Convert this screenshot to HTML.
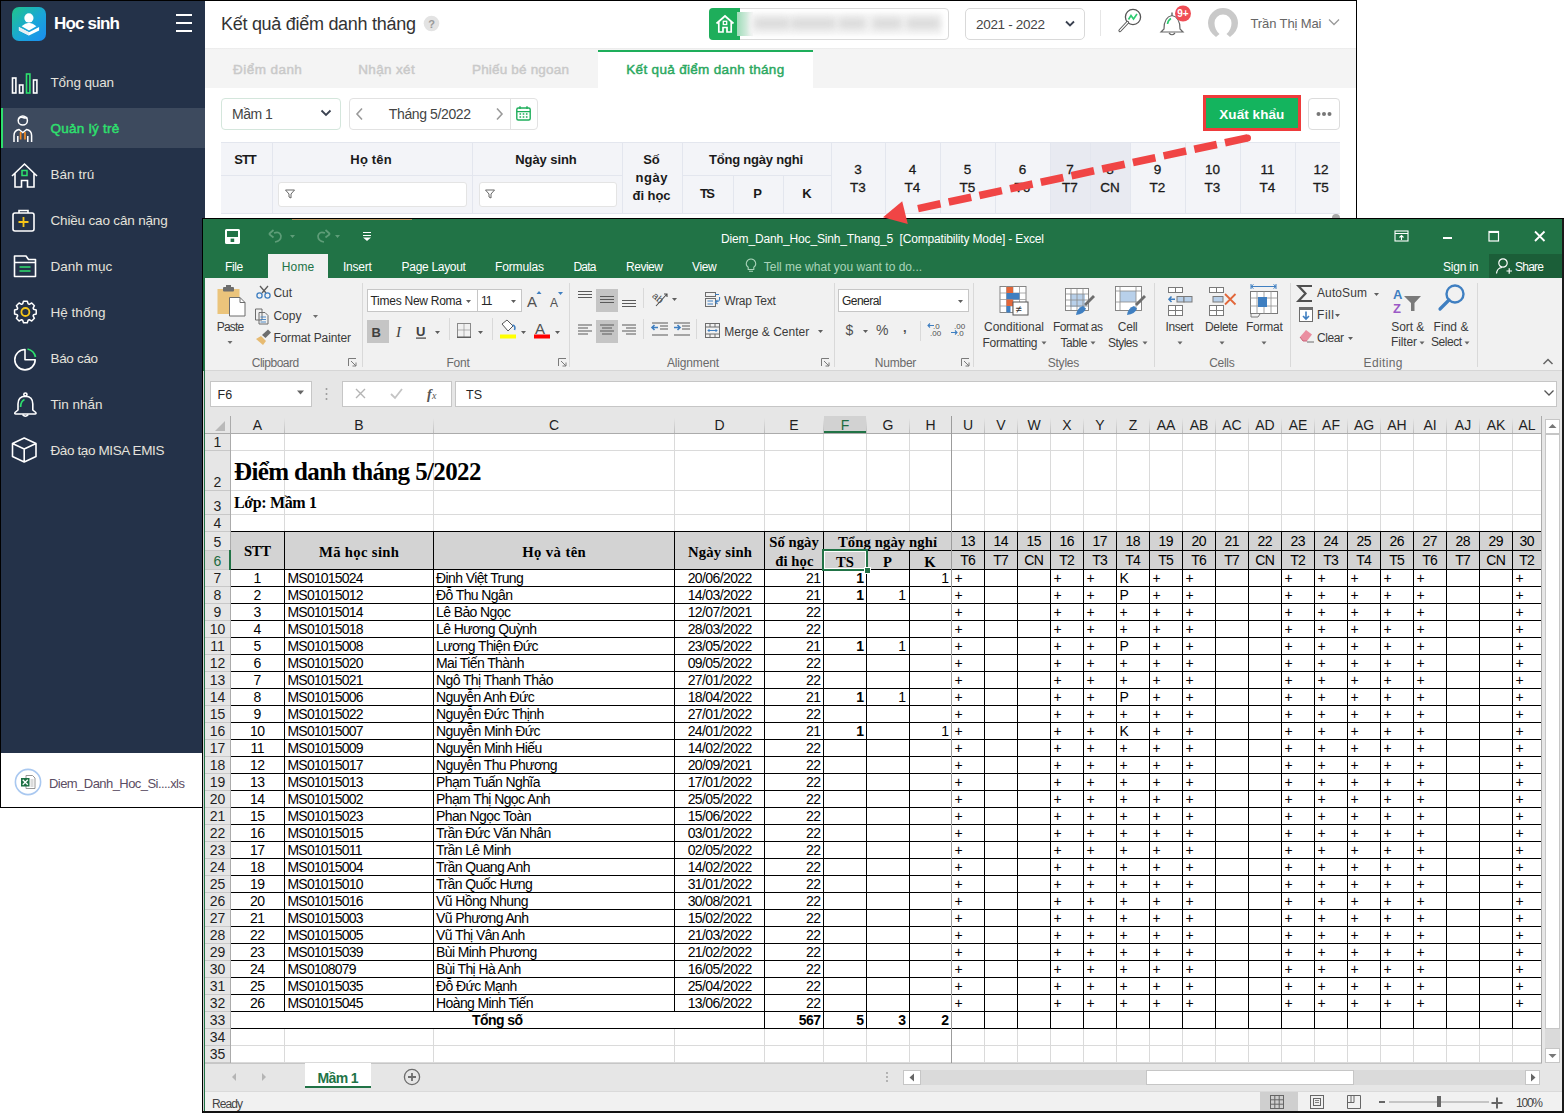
<!DOCTYPE html>
<html><head><meta charset="utf-8"><title>Excel export</title>
<style>
html,body{margin:0;padding:0;}
body{width:1564px;height:1113px;position:relative;overflow:hidden;background:#fff;font-family:"Liberation Sans",sans-serif;}
body>div{position:absolute;}
body>svg{position:absolute;}
</style></head><body>
<div style="left:0px;top:0px;width:1357px;height:1px;background:#000;"></div>
<div style="left:0px;top:0px;width:1px;height:808px;background:#000;"></div>
<div style="left:1356px;top:0px;width:1px;height:220px;background:#000;"></div>
<div style="left:0px;top:807px;width:203px;height:1px;background:#000;"></div>
<div style="left:1px;top:1px;width:204px;height:752px;background:#243249;"></div>
<div style="left:1px;top:108px;width:204px;height:40px;background:#3d4a5e;"></div>
<div style="left:1px;top:108px;width:2px;height:40px;background:#2ee06e;"></div>
<div style="left:12px;top:7px;width:34px;height:34px;background:linear-gradient(135deg,#20c58a 0%,#1aa6d8 55%,#1a8cf2 100%);border-radius:7px;"></div>
<svg style="left:12px;top:7px" width="34" height="34" viewBox="0 0 34 34"><circle cx="16.9" cy="10.9" r="4.6" fill="#fff"/><path d="M9.6 19.3 Q17 12.2 24.4 19.3 L17 23.4 Z" fill="#fff"/><path d="M6.9 20 L17 25.2 L27.1 20 L27.1 23.4 L17 28.6 L6.9 23.4 Z" fill="#fff"/><path d="M6.9 20 L17 25.2 V28.6 L6.9 23.4 Z" fill="#e8eef2"/></svg>
<div style="left:54.00px;top:14px;font:700 17px/19px 'Liberation Sans',sans-serif;color:#fff;white-space:nowrap;letter-spacing:-0.828px;">Học sinh</div>
<div style="left:176px;top:14px;width:16px;height:2.4px;background:#fff;"></div>
<div style="left:176px;top:22px;width:16px;height:2.4px;background:#fff;"></div>
<div style="left:176px;top:30px;width:16px;height:2.4px;background:#fff;"></div>
<div style="left:50.50px;top:75px;font:400 13.5px/15px 'Liberation Sans',sans-serif;color:#e4e2dc;white-space:nowrap;letter-spacing:-0.126px;">Tổng quan</div>
<div style="left:50.50px;top:121px;font:400 13.5px/15px 'Liberation Sans',sans-serif;color:#2ee06e;white-space:nowrap;letter-spacing:0.274px;-webkit-text-stroke:0.45px currentColor;">Quản lý trẻ</div>
<div style="left:50.50px;top:167px;font:400 13.5px/15px 'Liberation Sans',sans-serif;color:#e4e2dc;white-space:nowrap;letter-spacing:0.026px;">Bán trú</div>
<div style="left:50.50px;top:213px;font:400 13.5px/15px 'Liberation Sans',sans-serif;color:#e4e2dc;white-space:nowrap;letter-spacing:-0.169px;">Chiều cao cân nặng</div>
<div style="left:50.50px;top:259px;font:400 13.5px/15px 'Liberation Sans',sans-serif;color:#e4e2dc;white-space:nowrap;letter-spacing:0.034px;">Danh mục</div>
<div style="left:50.50px;top:305px;font:400 13.5px/15px 'Liberation Sans',sans-serif;color:#e4e2dc;white-space:nowrap;letter-spacing:0.025px;">Hệ thống</div>
<div style="left:50.50px;top:351px;font:400 13.5px/15px 'Liberation Sans',sans-serif;color:#e4e2dc;white-space:nowrap;letter-spacing:-0.327px;">Báo cáo</div>
<div style="left:50.50px;top:397px;font:400 13.5px/15px 'Liberation Sans',sans-serif;color:#e4e2dc;white-space:nowrap;letter-spacing:0.003px;">Tin nhắn</div>
<div style="left:50.50px;top:443px;font:400 13.5px/15px 'Liberation Sans',sans-serif;color:#e4e2dc;white-space:nowrap;letter-spacing:-0.385px;">Đào tạo MISA EMIS</div>
<svg style="left:8px;top:64.5px" width="34" height="420" viewBox="0 0 34 420">
<g fill="none" stroke="#fff" stroke-width="1.6">
 <rect x="4.5" y="13" width="3.4" height="15"/><rect x="11.5" y="20" width="3.4" height="8"/>
 <rect x="25.5" y="15" width="3.4" height="13"/>
</g>
<rect x="18.5" y="9" width="3.4" height="19" fill="none" stroke="#2ee06e" stroke-width="1.6"/>
<g fill="none" stroke="#fff" stroke-width="1.5">
 <circle cx="14.8" cy="55.5" r="4.6"/>
 <path d="M10.5 54 Q12 51.5 15 52.5 Q17.5 53.5 19.4 52.5"/>
 <path d="M6 77 V70.5 Q6 65.5 11 64.5 L14.8 67.5 L18.6 64.5 Q23.6 65.5 23.6 70.5 V77"/>
 <path d="M9.8 77 V71 M19.8 77 V71"/>
</g>
<path d="M12.6 67 V74.5 M17 67 V74.5" stroke="#f08a24" stroke-width="1.7" fill="none"/>
<g fill="none" stroke="#fff" stroke-width="1.6">
 <path d="M4 111 L16.5 99 L29 111 M7 108.5 V122 H13.5 V115.5 H19.5 V122 H26 V108.5"/>
</g>
<rect x="14" y="105.5" width="5" height="5" fill="none" stroke="#2ee06e" stroke-width="1.5"/>
<g fill="none" stroke="#fff" stroke-width="1.6">
 <rect x="5" y="148" width="21" height="18" rx="2"/><path d="M11 148 V145.5 H20 V148"/>
</g>
<path d="M15.5 152 V162 M10.5 157 H20.5" stroke="#f5c518" stroke-width="1.8"/>
</svg>
<svg style="left:0;top:240px" width="50" height="230" viewBox="0 240 50 230">
<g fill="none" stroke="#fff" stroke-width="1.6" stroke-linejoin="round">
 <path d="M14.5 259.5 V256 H26 L28.5 259.5 H35.5 V276.5 H14.5 Z M14.5 262.5 H35.5"/>
</g>
<path d="M19.5 267 H30.5 M19.5 271 H30.5" stroke="#2ee06e" stroke-width="1.7"/>
<path d="M33.56 309.27 L36.23 310.09 L36.23 313.91 L33.56 314.73 L33.10 315.84 L34.41 318.31 L31.71 321.01 L29.24 319.70 L28.13 320.16 L27.31 322.83 L23.49 322.83 L22.67 320.16 L21.56 319.70 L19.09 321.01 L16.39 318.31 L17.70 315.84 L17.24 314.73 L14.57 313.91 L14.57 310.09 L17.24 309.27 L17.70 308.16 L16.39 305.69 L19.09 302.99 L21.56 304.30 L22.67 303.84 L23.49 301.17 L27.31 301.17 L28.13 303.84 L29.24 304.30 L31.71 302.99 L34.41 305.69 L33.10 308.16 Z" fill="none" stroke="#fff" stroke-width="1.5" stroke-linejoin="round"/>
<circle cx="25.4" cy="312" r="4" fill="none" stroke="#f5c518" stroke-width="1.8"/>
<path d="M25 349.5 A10.2 10.2 0 1 0 35.2 359.7 H25 Z" fill="none" stroke="#fff" stroke-width="1.6" stroke-linejoin="round"/>
<path d="M27.5 349 A10.5 10.5 0 0 1 35.5 357" fill="none" stroke="#2ee06e" stroke-width="1.7"/>
<g fill="none" stroke="#fff" stroke-width="1.6" stroke-linejoin="round">
 <circle cx="25.4" cy="394.6" r="1.6"/>
 <path d="M18 410 V404 Q18 396.5 25.4 396.3 Q32.8 396.5 32.8 404 V410 L35.8 412.5 Q36.5 414 35 414 H15.8 Q14.3 414 15 412.5 Z"/>
 <path d="M22.5 414.5 Q25.4 418 28.3 414.5"/>
</g>
<path d="M20.6 407 Q20.8 401 24.5 399.5" fill="none" stroke="#2ee06e" stroke-width="1.7"/>
<g fill="none" stroke="#fff" stroke-width="1.6" stroke-linejoin="round">
 <path d="M24.2 438 L36 443.5 V456.5 L24.2 462 L12.5 456.5 V443.5 Z M12.5 443.5 L24.2 449 L36 443.5 M24.2 449 V462"/>
</g>
</svg>
<div style="left:1px;top:753px;width:202px;height:54px;background:#fff;"></div>
<svg style="left:14px;top:768px" width="28" height="28" viewBox="0 0 28 28">
<circle cx="14" cy="14" r="12.6" fill="#fff" stroke="#a9c8f0" stroke-width="1.6"/>
<path d="M12 7.5 H18.5 L21 10 V20.5 H12 Z" fill="#fff" stroke="#8a8a8a" stroke-width="0.9"/>
<rect x="7" y="10" width="8.5" height="8.5" fill="#1d7044"/>
<path d="M8.7 11.8 L13.8 16.8 M13.8 11.8 L8.7 16.8" stroke="#fff" stroke-width="1.3"/>
<path d="M16.5 12 H19.5 M16.5 14 H19.5 M16.5 16 H19.5 M16.5 18 H19.5" stroke="#9a9a9a" stroke-width="0.7"/>
</svg>
<div style="left:49.00px;top:776px;font:400 13px/15px 'Liberation Sans',sans-serif;color:#5b4d63;white-space:nowrap;letter-spacing:-0.553px;">Diem_Danh_Hoc_Si....xls</div>
<div style="left:205px;top:1px;width:1151px;height:48px;background:#fff;"></div>
<div style="left:221.00px;top:14px;font:400 18px/20px 'Liberation Sans',sans-serif;color:#333;white-space:nowrap;letter-spacing:-0.283px;">Kết quả điểm danh tháng</div>
<svg style="left:423px;top:15px" width="17" height="17" viewBox="0 0 17 17"><circle cx="8.5" cy="8.5" r="7.8" fill="#e3e3e3"/><text x="8.5" y="12.6" font-family="Liberation Sans" font-size="11" font-weight="700" fill="#9a9a9a" text-anchor="middle">?</text></svg>
<div style="left:709px;top:8px;width:240px;height:32px;box-sizing:border-box;border:1px solid #d9d9d9;background:#fff;border-radius:4px;"></div>
<div style="left:709px;top:8px;width:31px;height:32px;background:#1eae5b;border-radius:4px 0 0 4px;"></div>
<svg style="left:713px;top:12px" width="24" height="24" viewBox="0 0 24 24"><path d="M3.5 11.5 L12 4 L20.5 11.5 M5.8 9.5 V20 H10 V15.5 H14 V20 H18.2 V9.5" fill="none" stroke="#fff" stroke-width="1.7"/><rect x="10.3" y="9.3" width="3.4" height="3.2" fill="none" stroke="#fff" stroke-width="1.3"/></svg>
<div style="left:737px;top:12px;width:16px;height:24px;background:linear-gradient(90deg,#9edcb8,#f4f4f4);"></div>
<div style="left:750px;top:13px;width:192px;height:22px;background:#f3f3f3;filter:blur(2px);"></div>
<div style="left:754px;top:18px;width:36px;height:11px;background:#dcdcdc;filter:blur(3px);border-radius:5px;"></div>
<div style="left:790px;top:18px;width:46px;height:11px;background:#dcdcdc;filter:blur(3px);border-radius:5px;"></div>
<div style="left:838px;top:18px;width:28px;height:11px;background:#dcdcdc;filter:blur(3px);border-radius:5px;"></div>
<div style="left:872px;top:18px;width:30px;height:11px;background:#dcdcdc;filter:blur(3px);border-radius:5px;"></div>
<div style="left:906px;top:18px;width:34px;height:11px;background:#dcdcdc;filter:blur(3px);border-radius:5px;"></div>
<div style="left:965px;top:8px;width:120px;height:32px;box-sizing:border-box;border:1px solid #d9d9d9;background:#fff;border-radius:5px;"></div>
<div style="left:976.00px;top:17px;font:400 13.5px/15px 'Liberation Sans',sans-serif;color:#444;white-space:nowrap;letter-spacing:-0.312px;">2021 - 2022</div>
<svg style="left:1064px;top:19px" width="12" height="10" viewBox="0 0 12 10"><path d="M2 2.5 L6 6.5 L10 2.5" fill="none" stroke="#3a4150" stroke-width="1.8"/></svg>
<div style="left:1100px;top:10px;width:1px;height:26px;background:#e6e6e6;"></div>
<svg style="left:1114px;top:6px" width="30" height="30" viewBox="0 0 30 30">
<circle cx="19" cy="11" r="7.6" fill="none" stroke="#555" stroke-width="1.3"/>
<path d="M13.5 16.5 L6 24.5" stroke="#555" stroke-width="3.2" stroke-linecap="round"/>
<path d="M13.5 16.5 L6 24.5" stroke="#fff" stroke-width="1.2" stroke-linecap="round"/>
<path d="M14.5 13.5 L17 9.5 L19.5 13 L23 8" fill="none" stroke="#2ecc71" stroke-width="1.6"/>
</svg>
<svg style="left:1158px;top:5px" width="38" height="34" viewBox="0 -1 38 34">
<path d="M6 23 Q6 11 14 9.5 Q22 11 22 23 L25 26 H3 Z" fill="none" stroke="#666" stroke-width="1.2"/>
<path d="M11 27 Q14 30.5 17 27" fill="none" stroke="#666" stroke-width="1.2"/>
<path d="M14 6.5 V9.5" stroke="#666" stroke-width="1.4"/>
<path d="M9.5 18 Q10 14 13 12.5" fill="none" stroke="#2ecc71" stroke-width="1.6"/>
<circle cx="25" cy="7.5" r="8" fill="#ef4d55"/>
<text x="25" y="11" font-family="Liberation Sans" font-size="10" font-weight="700" fill="#fff" text-anchor="middle">9+</text>
</svg>
<svg style="left:1206px;top:6px" width="34" height="34" viewBox="0 0 34 34"><path d="M10 31 Q2 25 2 17 A15 15 0 0 1 32 17 Q32 25 24 31 L20.5 28 Q25.5 23.5 25.5 17 A8.5 8.5 0 0 0 8.5 17 Q8.5 23.5 13.5 28 Z" fill="#c9c9c9"/></svg>
<div style="left:1250.50px;top:16px;font:400 13px/15px 'Liberation Sans',sans-serif;color:#666;white-space:nowrap;letter-spacing:-0.114px;">Trần Thị Mai</div>
<svg style="left:1327px;top:17px" width="14" height="10" viewBox="0 0 14 10"><path d="M2 2.5 L7 7.5 L12 2.5" fill="none" stroke="#9a9a9a" stroke-width="1.3"/></svg>
<div style="left:205px;top:48px;width:1151px;height:2px;background:linear-gradient(#e9e9e9,#f7f7f7);"></div>
<div style="left:205px;top:50px;width:1151px;height:38px;background:#f4f4f4;"></div>
<div style="left:598px;top:50px;width:215px;height:38px;background:#fff;"></div>
<div style="left:598px;top:50px;width:215px;height:2px;background:#1eae5b;"></div>
<div style="left:233.10px;top:62px;font:400 13.5px/15px 'Liberation Sans',sans-serif;color:#c9c9c9;white-space:nowrap;letter-spacing:0.434px;-webkit-text-stroke:0.45px currentColor;">Điểm danh</div>
<div style="left:358.25px;top:62px;font:400 13.5px/15px 'Liberation Sans',sans-serif;color:#c9c9c9;white-space:nowrap;letter-spacing:0.348px;-webkit-text-stroke:0.45px currentColor;">Nhận xét</div>
<div style="left:472.00px;top:62px;font:400 13.5px/15px 'Liberation Sans',sans-serif;color:#c9c9c9;white-space:nowrap;letter-spacing:0.180px;-webkit-text-stroke:0.45px currentColor;">Phiếu bé ngoan</div>
<div style="left:626.30px;top:62px;font:400 13.5px/15px 'Liberation Sans',sans-serif;color:#2aa860;white-space:nowrap;letter-spacing:0.320px;-webkit-text-stroke:0.45px currentColor;">Kết quả điểm danh tháng</div>
<div style="left:221px;top:98px;width:120px;height:32px;box-sizing:border-box;border:1px solid #d4e6dc;background:#fff;border-radius:4px;"></div>
<div style="left:232.00px;top:106px;font:400 14px/16px 'Liberation Sans',sans-serif;color:#444;white-space:nowrap;letter-spacing:-0.491px;">Mầm 1</div>
<svg style="left:319px;top:108px" width="14" height="10" viewBox="0 0 14 10"><path d="M2.5 2.5 L7 7 L11.5 2.5" fill="none" stroke="#3a4150" stroke-width="1.8"/></svg>
<div style="left:349px;top:98px;width:189px;height:32px;box-sizing:border-box;border:1px solid #e2e2e2;background:#fff;border-radius:4px;"></div>
<svg style="left:354px;top:106px" width="12" height="16" viewBox="0 0 12 16"><path d="M8 2.5 L3 8 L8 13.5" fill="none" stroke="#9a9a9a" stroke-width="1.6"/></svg>
<div style="left:388.80px;top:106px;font:400 14px/16px 'Liberation Sans',sans-serif;color:#444;white-space:nowrap;letter-spacing:-0.378px;">Tháng 5/2022</div>
<svg style="left:493px;top:106px" width="12" height="16" viewBox="0 0 12 16"><path d="M4 2.5 L9 8 L4 13.5" fill="none" stroke="#9a9a9a" stroke-width="1.6"/></svg>
<div style="left:510px;top:99px;width:1px;height:30px;background:#e2e2e2;"></div>
<svg style="left:515px;top:105px" width="17" height="17" viewBox="0 0 17 17">
<rect x="1.8" y="3" width="13.4" height="12" rx="1.5" fill="none" stroke="#1eae5b" stroke-width="1.4"/>
<path d="M1.8 6.6 H15.2 M5 1.2 V4 M12 1.2 V4" stroke="#1eae5b" stroke-width="1.4"/>
<path d="M4.5 9 h1.6 M7.7 9 h1.6 M10.9 9 h1.6 M4.5 12 h1.6 M7.7 12 h1.6 M10.9 12 h1.6" stroke="#1eae5b" stroke-width="1.5"/>
</svg>
<div style="left:1203px;top:94.5px;width:98px;height:36px;background:#ee3b3b;"></div>
<div style="left:1206px;top:97.5px;width:92px;height:30px;background:#14b45e;"></div>
<div style="left:1219.30px;top:107px;font:700 13.5px/15px 'Liberation Sans',sans-serif;color:#fff;white-space:nowrap;letter-spacing:0.057px;">Xuất khẩu</div>
<div style="left:1308px;top:98px;width:32px;height:32px;box-sizing:border-box;border:1px solid #dcdcdc;background:#fff;border-radius:4px;"></div>
<svg style="left:1314px;top:108px" width="20" height="12" viewBox="0 0 20 12"><circle cx="4.5" cy="6" r="2" fill="#777"/><circle cx="10" cy="6" r="2" fill="#777"/><circle cx="15.5" cy="6" r="2" fill="#777"/></svg>
<div style="left:221px;top:142px;width:1119px;height:72px;background:#f3f4f8;"></div>
<div style="left:221px;top:142px;width:1119px;height:1px;background:#e3e6ee;"></div>
<div style="left:1050px;top:143px;width:80px;height:71px;background:#e8eaf1;"></div>
<div style="left:272px;top:143px;width:1px;height:71px;background:#e3e6ee;"></div>
<div style="left:472px;top:143px;width:1px;height:71px;background:#e3e6ee;"></div>
<div style="left:622px;top:143px;width:1px;height:71px;background:#e3e6ee;"></div>
<div style="left:682px;top:143px;width:1px;height:71px;background:#e3e6ee;"></div>
<div style="left:831px;top:143px;width:1px;height:71px;background:#e3e6ee;"></div>
<div style="left:885px;top:143px;width:1px;height:71px;background:#e3e6ee;"></div>
<div style="left:940px;top:143px;width:1px;height:71px;background:#e3e6ee;"></div>
<div style="left:995px;top:143px;width:1px;height:71px;background:#e3e6ee;"></div>
<div style="left:1050px;top:143px;width:1px;height:71px;background:#e3e6ee;"></div>
<div style="left:1090px;top:143px;width:1px;height:71px;background:#e3e6ee;"></div>
<div style="left:1130px;top:143px;width:1px;height:71px;background:#e3e6ee;"></div>
<div style="left:1185px;top:143px;width:1px;height:71px;background:#e3e6ee;"></div>
<div style="left:1240px;top:143px;width:1px;height:71px;background:#e3e6ee;"></div>
<div style="left:1295px;top:143px;width:1px;height:71px;background:#e3e6ee;"></div>
<div style="left:221px;top:175px;width:51px;height:1px;background:#e3e6ee;"></div>
<div style="left:273px;top:175px;width:349px;height:1px;background:#e3e6ee;"></div>
<div style="left:683px;top:175px;width:148px;height:1px;background:#e3e6ee;"></div>
<div style="left:733px;top:176px;width:1px;height:38px;background:#e3e6ee;"></div>
<div style="left:783px;top:176px;width:1px;height:38px;background:#e3e6ee;"></div>
<div style="left:221px;top:213px;width:1119px;height:1px;background:#e3e6ee;"></div>
<div style="left:234.25px;top:152px;font:700 13px/15px 'Liberation Sans',sans-serif;color:#1a1a1a;white-space:nowrap;letter-spacing:-1.023px;">STT</div>
<div style="left:350.35px;top:152px;font:700 13px/15px 'Liberation Sans',sans-serif;color:#1a1a1a;white-space:nowrap;letter-spacing:0.172px;">Họ tên</div>
<div style="left:515.25px;top:152px;font:700 13px/15px 'Liberation Sans',sans-serif;color:#1a1a1a;white-space:nowrap;letter-spacing:-0.078px;">Ngày sinh</div>
<div style="left:643.20px;top:152px;font:700 13px/15px 'Liberation Sans',sans-serif;color:#1a1a1a;white-space:nowrap;">Số</div>
<div style="left:635.50px;top:170px;font:700 13px/15px 'Liberation Sans',sans-serif;color:#1a1a1a;white-space:nowrap;letter-spacing:0.552px;">ngày</div>
<div style="left:632.50px;top:188px;font:700 13px/15px 'Liberation Sans',sans-serif;color:#1a1a1a;white-space:nowrap;letter-spacing:-0.053px;">đi học</div>
<div style="left:709.00px;top:152px;font:700 13px/15px 'Liberation Sans',sans-serif;color:#1a1a1a;white-space:nowrap;letter-spacing:-0.210px;">Tổng ngày nghỉ</div>
<div style="left:700.00px;top:186px;font:700 13px/15px 'Liberation Sans',sans-serif;color:#1a1a1a;white-space:nowrap;letter-spacing:-1.609px;">TS</div>
<div style="left:753.16px;top:186px;font:700 13px/15px 'Liberation Sans',sans-serif;color:#1a1a1a;white-space:nowrap;">P</div>
<div style="left:802.30px;top:186px;font:700 13px/15px 'Liberation Sans',sans-serif;color:#1a1a1a;white-space:nowrap;">K</div>
<div style="left:854.24px;top:162px;font:400 13.5px/15px 'Liberation Sans',sans-serif;color:#1a1a1a;white-space:nowrap;-webkit-text-stroke:0.3px #1a1a1a;">3</div>
<div style="left:850.12px;top:180px;font:400 13.5px/15px 'Liberation Sans',sans-serif;color:#1a1a1a;white-space:nowrap;-webkit-text-stroke:0.3px #1a1a1a;">T3</div>
<div style="left:908.74px;top:162px;font:400 13.5px/15px 'Liberation Sans',sans-serif;color:#1a1a1a;white-space:nowrap;-webkit-text-stroke:0.3px #1a1a1a;">4</div>
<div style="left:904.62px;top:180px;font:400 13.5px/15px 'Liberation Sans',sans-serif;color:#1a1a1a;white-space:nowrap;-webkit-text-stroke:0.3px #1a1a1a;">T4</div>
<div style="left:963.74px;top:162px;font:400 13.5px/15px 'Liberation Sans',sans-serif;color:#1a1a1a;white-space:nowrap;-webkit-text-stroke:0.3px #1a1a1a;">5</div>
<div style="left:959.62px;top:180px;font:400 13.5px/15px 'Liberation Sans',sans-serif;color:#1a1a1a;white-space:nowrap;-webkit-text-stroke:0.3px #1a1a1a;">T5</div>
<div style="left:1018.74px;top:162px;font:400 13.5px/15px 'Liberation Sans',sans-serif;color:#1a1a1a;white-space:nowrap;-webkit-text-stroke:0.3px #1a1a1a;">6</div>
<div style="left:1014.62px;top:180px;font:400 13.5px/15px 'Liberation Sans',sans-serif;color:#1a1a1a;white-space:nowrap;-webkit-text-stroke:0.3px #1a1a1a;">T6</div>
<div style="left:1066.24px;top:162px;font:400 13.5px/15px 'Liberation Sans',sans-serif;color:#1a1a1a;white-space:nowrap;-webkit-text-stroke:0.3px #1a1a1a;">7</div>
<div style="left:1062.12px;top:180px;font:400 13.5px/15px 'Liberation Sans',sans-serif;color:#1a1a1a;white-space:nowrap;-webkit-text-stroke:0.3px #1a1a1a;">T7</div>
<div style="left:1106.24px;top:162px;font:400 13.5px/15px 'Liberation Sans',sans-serif;color:#1a1a1a;white-space:nowrap;-webkit-text-stroke:0.3px #1a1a1a;">8</div>
<div style="left:1100.25px;top:180px;font:400 13.5px/15px 'Liberation Sans',sans-serif;color:#1a1a1a;white-space:nowrap;-webkit-text-stroke:0.3px #1a1a1a;">CN</div>
<div style="left:1153.74px;top:162px;font:400 13.5px/15px 'Liberation Sans',sans-serif;color:#1a1a1a;white-space:nowrap;-webkit-text-stroke:0.3px #1a1a1a;">9</div>
<div style="left:1149.62px;top:180px;font:400 13.5px/15px 'Liberation Sans',sans-serif;color:#1a1a1a;white-space:nowrap;-webkit-text-stroke:0.3px #1a1a1a;">T2</div>
<div style="left:1204.98px;top:162px;font:400 13.5px/15px 'Liberation Sans',sans-serif;color:#1a1a1a;white-space:nowrap;-webkit-text-stroke:0.3px #1a1a1a;">10</div>
<div style="left:1204.62px;top:180px;font:400 13.5px/15px 'Liberation Sans',sans-serif;color:#1a1a1a;white-space:nowrap;-webkit-text-stroke:0.3px #1a1a1a;">T3</div>
<div style="left:1260.48px;top:162px;font:400 13.5px/15px 'Liberation Sans',sans-serif;color:#1a1a1a;white-space:nowrap;-webkit-text-stroke:0.3px #1a1a1a;">11</div>
<div style="left:1259.62px;top:180px;font:400 13.5px/15px 'Liberation Sans',sans-serif;color:#1a1a1a;white-space:nowrap;-webkit-text-stroke:0.3px #1a1a1a;">T4</div>
<div style="left:1313.48px;top:162px;font:400 13.5px/15px 'Liberation Sans',sans-serif;color:#1a1a1a;white-space:nowrap;-webkit-text-stroke:0.3px #1a1a1a;">12</div>
<div style="left:1313.12px;top:180px;font:400 13.5px/15px 'Liberation Sans',sans-serif;color:#1a1a1a;white-space:nowrap;-webkit-text-stroke:0.3px #1a1a1a;">T5</div>
<div style="left:278px;top:182px;width:189px;height:25px;box-sizing:border-box;border:1px solid #e4e4e4;background:#fff;border-radius:3px;"></div>
<div style="left:479px;top:182px;width:138px;height:25px;box-sizing:border-box;border:1px solid #e4e4e4;background:#fff;border-radius:3px;"></div>
<svg style="left:284px;top:188px" width="12" height="12" viewBox="0 0 12 12"><path d="M1.5 2 H10.5 L7 6 V10 L5 9 V6 Z" fill="none" stroke="#666" stroke-width="1"/></svg>
<svg style="left:484px;top:188px" width="12" height="12" viewBox="0 0 12 12"><path d="M1.5 2 H10.5 L7 6 V10 L5 9 V6 Z" fill="none" stroke="#666" stroke-width="1"/></svg>
<svg style="left:1330px;top:210px" width="12" height="9" viewBox="0 0 12 9"><circle cx="6" cy="8" r="4" fill="#a8a8a8"/></svg>
<div style="left:202px;top:218px;width:1362px;height:1px;background:#000;"></div>
<div style="left:202px;top:218px;width:1px;height:895px;background:#000;"></div>
<div style="left:203px;top:219px;width:1361px;height:894px;background:#217346;"></div>
<div style="left:203px;top:371px;width:1px;height:742px;background:#cfcfcf;"></div>
<div style="left:292px;top:219px;width:120px;height:1px;background:#b0955e;"></div>
<div style="left:721.00px;top:232px;font:400 12px/14px 'Liberation Sans',sans-serif;color:#fff;white-space:nowrap;letter-spacing:-0.154px;">Diem_Danh_Hoc_Sinh_Thang_5&nbsp; [Compatibility Mode] - Excel</div>
<svg style="left:222px;top:226px" width="160" height="20" viewBox="0 0 160 20">
<rect x="4" y="4" width="13" height="13" rx="0.5" fill="none" stroke="#fff" stroke-width="2"/>
<rect x="5" y="11" width="11" height="5" fill="#fff"/><rect x="8.6" y="12.6" width="3.6" height="3.4" fill="#217346"/>
<g fill="none" stroke="#5e9d78" stroke-width="1.7">
<path d="M52 7 Q58 5 59 10 Q59 15 53 16"/><path d="M47 8 L51.5 4 M47 8 L51.5 11.5"/>
<path d="M103 7 Q97 5 96 10 Q96 15 102 16"/><path d="M108 8 L103.5 4 M108 8 L103.5 11.5"/>
</g>
<path d="M68 9 h5 l-2.5 3 z M113 9 h5 l-2.5 3 z" fill="#5e9d78"/>
<path d="M141 6.5 H149 M141 9.5 H149" stroke="#fff" stroke-width="1.2"/><path d="M141 11.5 H149 L145 15 Z" fill="#fff"/>
</svg>
<svg style="left:1390px;top:226px" width="165" height="20" viewBox="0 0 165 20">
<rect x="5" y="5" width="13" height="10" fill="none" stroke="#fff" stroke-width="1.1"/>
<path d="M5 7.5 H18 M11.5 14 V9.5 M9.5 11.5 L11.5 9.5 L13.5 11.5" fill="none" stroke="#fff" stroke-width="1.1"/>
<rect x="53" y="11" width="9" height="2" fill="#fff"/>
<rect x="99" y="5.5" width="9.5" height="9.5" fill="none" stroke="#fff" stroke-width="1.2"/><rect x="99" y="5" width="9.5" height="2" fill="#fff"/>
<path d="M145 5.5 L154.5 15 M154.5 5.5 L145 15" stroke="#fff" stroke-width="1.8"/>
</svg>
<div style="left:268px;top:254px;width:60px;height:24px;background:#f1f1f1;"></div>
<div style="left:225.00px;top:260px;font:400 12px/14px 'Liberation Sans',sans-serif;color:#fff;white-space:nowrap;letter-spacing:-0.348px;">File</div>
<div style="left:281.70px;top:260px;font:400 12px/14px 'Liberation Sans',sans-serif;color:#217346;white-space:nowrap;letter-spacing:0.195px;">Home</div>
<div style="left:343.00px;top:260px;font:400 12px/14px 'Liberation Sans',sans-serif;color:#fff;white-space:nowrap;letter-spacing:-0.240px;">Insert</div>
<div style="left:401.60px;top:260px;font:400 12px/14px 'Liberation Sans',sans-serif;color:#fff;white-space:nowrap;letter-spacing:-0.306px;">Page Layout</div>
<div style="left:495.00px;top:260px;font:400 12px/14px 'Liberation Sans',sans-serif;color:#fff;white-space:nowrap;letter-spacing:-0.145px;">Formulas</div>
<div style="left:573.40px;top:260px;font:400 12px/14px 'Liberation Sans',sans-serif;color:#fff;white-space:nowrap;letter-spacing:-0.781px;">Data</div>
<div style="left:626.00px;top:260px;font:400 12px/14px 'Liberation Sans',sans-serif;color:#fff;white-space:nowrap;letter-spacing:-0.472px;">Review</div>
<div style="left:692.00px;top:260px;font:400 12px/14px 'Liberation Sans',sans-serif;color:#fff;white-space:nowrap;letter-spacing:-0.366px;">View</div>
<svg style="left:744px;top:257px" width="14" height="17" viewBox="0 0 14 17"><path d="M7 2 A4.6 4.6 0 0 0 4.2 10.3 V12.5 H9.8 V10.3 A4.6 4.6 0 0 0 7 2 Z M5 14.3 H9" fill="none" stroke="#a9d3b9" stroke-width="1.1"/></svg>
<div style="left:763.70px;top:260px;font:400 12px/14px 'Liberation Sans',sans-serif;color:#a9d3b9;white-space:nowrap;letter-spacing:0.010px;">Tell me what you want to do...</div>
<div style="left:1443.00px;top:260px;font:400 12px/14px 'Liberation Sans',sans-serif;color:#fff;white-space:nowrap;letter-spacing:-0.198px;">Sign in</div>
<div style="left:1489px;top:254px;width:73px;height:24px;background:#1b5e38;"></div>
<svg style="left:1494px;top:256px" width="20" height="20" viewBox="0 0 20 20"><circle cx="9" cy="7" r="4.2" fill="none" stroke="#fff" stroke-width="1.2"/><path d="M2.5 17.5 Q3 12 8 11.5 M12.5 15 H18 M15.2 12.2 V17.8" fill="none" stroke="#fff" stroke-width="1.2"/></svg>
<div style="left:1515.00px;top:260px;font:400 12px/14px 'Liberation Sans',sans-serif;color:#fff;white-space:nowrap;letter-spacing:-0.754px;">Share</div>
<div style="left:205px;top:278px;width:1357px;height:92px;background:#f1f1f1;"></div>
<div style="left:205px;top:370px;width:1357px;height:1px;background:#d6d6d6;"></div>
<div style="left:362px;top:283px;width:1px;height:84px;background:#d9d9d9;"></div>
<div style="left:569px;top:283px;width:1px;height:84px;background:#d9d9d9;"></div>
<div style="left:834px;top:283px;width:1px;height:84px;background:#d9d9d9;"></div>
<div style="left:973px;top:283px;width:1px;height:84px;background:#d9d9d9;"></div>
<div style="left:1154px;top:283px;width:1px;height:84px;background:#d9d9d9;"></div>
<div style="left:1290px;top:283px;width:1px;height:84px;background:#d9d9d9;"></div>
<div style="left:1477px;top:283px;width:1px;height:84px;background:#d9d9d9;"></div>
<div style="left:251.75px;top:356px;font:400 12px/14px 'Liberation Sans',sans-serif;color:#6a6a6a;white-space:nowrap;letter-spacing:-0.484px;">Clipboard</div>
<div style="left:446.45px;top:356px;font:400 12px/14px 'Liberation Sans',sans-serif;color:#6a6a6a;white-space:nowrap;letter-spacing:-0.167px;">Font</div>
<div style="left:667.00px;top:356px;font:400 12px/14px 'Liberation Sans',sans-serif;color:#6a6a6a;white-space:nowrap;letter-spacing:-0.170px;">Alignment</div>
<div style="left:874.85px;top:356px;font:400 12px/14px 'Liberation Sans',sans-serif;color:#6a6a6a;white-space:nowrap;letter-spacing:-0.237px;">Number</div>
<div style="left:1047.75px;top:356px;font:400 12px/14px 'Liberation Sans',sans-serif;color:#6a6a6a;white-space:nowrap;letter-spacing:-0.234px;">Styles</div>
<div style="left:1209.25px;top:356px;font:400 12px/14px 'Liberation Sans',sans-serif;color:#6a6a6a;white-space:nowrap;letter-spacing:-0.297px;">Cells</div>
<div style="left:1363.50px;top:356px;font:400 12px/14px 'Liberation Sans',sans-serif;color:#6a6a6a;white-space:nowrap;letter-spacing:0.385px;">Editing</div>
<svg style="left:348px;top:358px" width="9" height="9" viewBox="0 0 9 9"><path d="M0.5 8 V0.5 H8 M3 3 L8 8 M8 4.5 V8 H4.5" fill="none" stroke="#7a7a7a" stroke-width="1"/></svg>
<svg style="left:558px;top:358px" width="9" height="9" viewBox="0 0 9 9"><path d="M0.5 8 V0.5 H8 M3 3 L8 8 M8 4.5 V8 H4.5" fill="none" stroke="#7a7a7a" stroke-width="1"/></svg>
<svg style="left:821px;top:358px" width="9" height="9" viewBox="0 0 9 9"><path d="M0.5 8 V0.5 H8 M3 3 L8 8 M8 4.5 V8 H4.5" fill="none" stroke="#7a7a7a" stroke-width="1"/></svg>
<svg style="left:961px;top:358px" width="9" height="9" viewBox="0 0 9 9"><path d="M0.5 8 V0.5 H8 M3 3 L8 8 M8 4.5 V8 H4.5" fill="none" stroke="#7a7a7a" stroke-width="1"/></svg>
<svg style="left:1542px;top:357px" width="12" height="9" viewBox="0 0 12 9"><path d="M1.5 7 L6 2.5 L10.5 7" fill="none" stroke="#666" stroke-width="1.5"/></svg>
<svg style="left:215px;top:284px" width="160" height="64" viewBox="0 0 160 64">
<rect x="2.5" y="5" width="22" height="25" fill="#ebc47b"/>
<rect x="8" y="3" width="11" height="4.5" rx="1" fill="#6d6d6d"/><rect x="11" y="1" width="5" height="3" fill="#6d6d6d"/>
<path d="M14.5 13.5 H25 L30 18.5 V32 H14.5 Z" fill="#fff" stroke="#6d6d6d" stroke-width="1"/>
<path d="M25 13.5 V18.5 H30" fill="none" stroke="#6d6d6d" stroke-width="1"/>
<path d="M12.5 57 h5 l-2.5 3 z" fill="#6d6d6d"/>
<g fill="none" stroke="#5c5c5c" stroke-width="1.3"><path d="M45 2 L51 9 M53 2 L47 9"/></g>
<g fill="none" stroke="#3f7fc1" stroke-width="1.3"><circle cx="44.5" cy="11.5" r="2.6"/><circle cx="52.5" cy="11.5" r="2.6"/></g>
<g fill="none" stroke="#6d6d6d" stroke-width="1"><path d="M40.5 25 H47 V36 H40.5 Z M44 28.5 H50 L53 31.5 V40 H44 Z"/></g>
<path d="M45.5 33 H51 M45.5 35.5 H51 M45.5 38 H51" stroke="#3f7fc1" stroke-width="0.9"/>
<path d="M98 31 h5 l-2.5 3 z" fill="#6d6d6d"/>
<path d="M41 55 L46 52 L51 57 L48 61 Z" fill="#e7bb72"/><path d="M47 51 L53 45.5 L56 48.5 L50.5 54 Z" fill="#6d6d6d"/>
</svg>
<div style="left:216.75px;top:320px;font:400 12px/14px 'Liberation Sans',sans-serif;color:#3b3b3b;white-space:nowrap;letter-spacing:-0.793px;">Paste</div>
<div style="left:273.40px;top:286px;font:400 12px/14px 'Liberation Sans',sans-serif;color:#3b3b3b;white-space:nowrap;letter-spacing:0.064px;">Cut</div>
<div style="left:273.40px;top:309px;font:400 12px/14px 'Liberation Sans',sans-serif;color:#3b3b3b;white-space:nowrap;letter-spacing:-0.005px;">Copy</div>
<div style="left:273.40px;top:331px;font:400 12px/14px 'Liberation Sans',sans-serif;color:#3b3b3b;white-space:nowrap;letter-spacing:-0.142px;">Format Painter</div>
<div style="left:367px;top:289px;width:111px;height:23px;box-sizing:border-box;border:1px solid #c6c6c6;background:#fff;"></div>
<div style="left:477px;top:289px;width:45px;height:23px;box-sizing:border-box;border:1px solid #c6c6c6;background:#fff;"></div>
<div style="left:370.50px;top:294px;font:400 12px/14px 'Liberation Sans',sans-serif;color:#262626;white-space:nowrap;letter-spacing:-0.263px;">Times New Roma</div>
<div style="left:481.00px;top:294px;font:400 12px/14px 'Liberation Sans',sans-serif;color:#262626;white-space:nowrap;letter-spacing:-1.000px;">11</div>
<div style="left:367px;top:320px;width:22px;height:23px;background:#c5c5c5;"></div>
<svg style="left:365px;top:288px" width="205" height="60" viewBox="0 0 205 60">
<path d="M101 12 h5 l-2.5 3 z M146 12 h5 l-2.5 3 z" fill="#5e5e5e"/>
<text x="162" y="19" font-family="Liberation Sans" font-size="15" fill="#505050">A</text>
<path d="M171.5 6 l2.5 -3 l2.5 3 z" fill="#3f7fc1"/>
<text x="185" y="19" font-family="Liberation Sans" font-size="12" fill="#505050">A</text>
<path d="M193 4 l2.5 3 l2.5 -3 z" fill="#3f7fc1"/>
<text x="6.5" y="48.5" font-family="Liberation Sans" font-size="13" font-weight="700" fill="#404040">B</text>
<text x="31" y="48.5" font-family="Liberation Serif" font-size="15" font-style="italic" fill="#404040">I</text>
<text x="51" y="47.5" font-family="Liberation Sans" font-size="13" font-weight="700" fill="#404040">U</text>
<rect x="51" y="49.5" width="10" height="1.2" fill="#404040"/>
<path d="M70 43 h5 l-2.5 3 z M113 43 h5 l-2.5 3 z M156 43 h5 l-2.5 3 z M190 43 h5 l-2.5 3 z" fill="#5e5e5e"/>
<g fill="#8a8a8a"><rect x="92" y="35" width="14" height="1"/><rect x="92" y="41.5" width="14" height="1" opacity=".6"/><rect x="92" y="35" width="1" height="14"/><rect x="105" y="35" width="1" height="14"/><rect x="98.5" y="35" width="1" height="14" opacity=".6"/></g>
<rect x="92" y="48.5" width="14" height="1.5" fill="#5e5e5e"/>
<rect x="84" y="30" width="1" height="22" fill="#d9d9d9"/><rect x="127" y="30" width="1" height="22" fill="#d9d9d9"/>
<path d="M137 36 L142 32 L148 38 L143 43 Z" fill="#fff" stroke="#555" stroke-width="1"/>
<path d="M147.5 37 Q151 38 149.5 42" fill="none" stroke="#3f7fc1" stroke-width="1.6"/>
<rect x="135" y="46.5" width="16" height="4" fill="#ffff00"/>
<text x="170" y="45.5" font-family="Liberation Sans" font-size="15" fill="#505050">A</text>
<rect x="169" y="46.5" width="16" height="4" fill="#ff0000"/>
</svg>
<div style="left:596px;top:289px;width:22px;height:23px;background:#c5c5c5;"></div>
<div style="left:596px;top:320px;width:22px;height:23px;background:#c5c5c5;"></div>
<svg style="left:576px;top:286px" width="130" height="60" viewBox="0 0 130 60">
<g stroke="#5a5a5a" stroke-width="1.1">
<path d="M2 5.5 H16 M2 8.5 H16 M2 11.5 H16"/>
<path d="M24 10.5 H38 M24 13.5 H38 M24 16.5 H38"/>
<path d="M46 14.5 H60 M46 17.5 H60 M46 20.5 H60"/>
<path d="M2 39 H16 M2 42 H12 M2 45 H16 M2 48 H12"/>
<path d="M24 39 H38 M26 42 H36 M24 45 H38 M26 48 H36"/>
<path d="M46 39 H60 M50 42 H60 M46 45 H60 M50 48 H60"/>
<path d="M84 40 H92 M84 43 H92 M76 49 H92 M76 37 H92"/>
<path d="M106 40 H114 M106 43 H114 M98 49 H114 M98 37 H114"/>
</g>
<path d="M82 41.5 H76 M78.5 39 L76 41.5 L78.5 44" stroke="#3f7fc1" stroke-width="1.6" fill="none"/>
<path d="M98 41.5 H104 M101.5 39 L104 41.5 L101.5 44" stroke="#3f7fc1" stroke-width="1.6" fill="none"/>
<rect x="67" y="33" width="1" height="20" fill="#d9d9d9"/><rect x="67" y="2" width="1" height="20" fill="#d9d9d9"/>
<rect x="120" y="33" width="1" height="20" fill="#d9d9d9"/>
<text x="77" y="15" font-family="Liberation Sans" font-size="10" fill="#4a4a4a" transform="rotate(40 82 11)">ab</text>
<path d="M80 20 L91 8 M88 8 H91 V11" stroke="#4a4a4a" stroke-width="1.1" fill="none"/>
<path d="M96 12 h5 l-2.5 3 z" fill="#5e5e5e"/>
</svg>
<svg style="left:703px;top:290px" width="125" height="52" viewBox="0 0 125 52">
<rect x="2.5" y="2.5" width="10" height="4" fill="none" stroke="#6d6d6d" stroke-width="1"/>
<rect x="2.5" y="8.5" width="10" height="8" fill="none" stroke="#6d6d6d" stroke-width="1"/>
<path d="M4.5 11 H10 M4.5 14 H10 M12 4.5 H16" stroke="#3f7fc1" stroke-width="1"/>
<path d="M16.5 7 Q17.5 12 12.5 12 M14.5 10 L12.5 12 L14.5 14" fill="none" stroke="#3f7fc1" stroke-width="1.2"/>
<rect x="2.5" y="33.5" width="14" height="14" fill="none" stroke="#6d6d6d" stroke-width="1"/>
<path d="M2.5 37 H16.5 M2.5 44 H16.5 M7 33.5 V37 M12 33.5 V37 M7 44 V47.5 M12 44 V47.5" stroke="#6d6d6d" stroke-width="1"/>
<path d="M5 40.5 H14 M6.5 39 L5 40.5 L6.5 42 M12.5 39 L14 40.5 L12.5 42" stroke="#3f7fc1" stroke-width="1" fill="none"/>
<path d="M115 40 h5 l-2.5 3 z" fill="#5e5e5e"/>
</svg>
<div style="left:724.30px;top:294px;font:400 12px/14px 'Liberation Sans',sans-serif;color:#3b3b3b;white-space:nowrap;letter-spacing:-0.270px;">Wrap Text</div>
<div style="left:724.30px;top:325px;font:400 12px/14px 'Liberation Sans',sans-serif;color:#3b3b3b;white-space:nowrap;letter-spacing:0.024px;">Merge & Center</div>
<div style="left:838px;top:289px;width:131px;height:23px;box-sizing:border-box;border:1px solid #c6c6c6;background:#fff;"></div>
<div style="left:842.00px;top:294px;font:400 12px/14px 'Liberation Sans',sans-serif;color:#262626;white-space:nowrap;letter-spacing:-0.531px;">General</div>
<svg style="left:840px;top:288px" width="130" height="60" viewBox="0 0 130 60">
<path d="M118 12 h5 l-2.5 3 z" fill="#5e5e5e"/>
<text x="5.5" y="47" font-family="Liberation Sans" font-size="14" fill="#505050">$</text>
<path d="M23 42 h5 l-2.5 3 z" fill="#5e5e5e"/>
<text x="36" y="47" font-family="Liberation Sans" font-size="14" fill="#505050">%</text>
<text x="63" y="44" font-family="Liberation Sans" font-size="13" font-weight="700" fill="#505050">,</text>
<rect x="80" y="33" width="1" height="20" fill="#d9d9d9"/>
<text x="93" y="41" font-family="Liberation Sans" font-size="8" fill="#505050">.0</text>
<text x="90" y="48" font-family="Liberation Sans" font-size="8" fill="#505050">.00</text>
<path d="M94 37.5 H88 M90 35.5 L88 37.5 L90 39.5" stroke="#3f7fc1" stroke-width="1.1" fill="none"/>
<text x="114" y="41" font-family="Liberation Sans" font-size="8" fill="#505050">.00</text>
<text x="117" y="48" font-family="Liberation Sans" font-size="8" fill="#505050">.0</text>
<path d="M111 44.5 H117 M115 42.5 L117 44.5 L115 46.5" stroke="#3f7fc1" stroke-width="1.1" fill="none"/>
</svg>
<svg style="left:997px;top:284px" width="155" height="36" viewBox="0 0 155 36">
<g fill="#fff" stroke="#7a7a7a" stroke-width="0.9">
<rect x="3" y="2.5" width="26" height="26"/>
</g>
<path d="M3 9 H29 M3 15.5 H29 M3 22 H29 M9.5 2.5 V28.5 M16 2.5 V28.5 M22.5 2.5 V28.5" stroke="#9a9a9a" stroke-width="0.8"/>
<rect x="9.5" y="3" width="6.5" height="6" fill="#e2673a"/><rect x="9.5" y="9" width="13" height="6.5" fill="#3f7fc1"/>
<rect x="9.5" y="15.5" width="6.5" height="6.5" fill="#e2673a"/><rect x="9.5" y="22" width="4" height="6.5" fill="#3f7fc1"/>
<rect x="16" y="18" width="15" height="13" fill="#fff" stroke="#555" stroke-width="1"/>
<text x="18.5" y="29" font-family="Liberation Sans" font-size="11" fill="#333">≠</text>
<rect x="68.5" y="4.5" width="23" height="22" fill="#fff" stroke="#7a7a7a" stroke-width="0.9"/>
<rect x="73" y="10" width="15" height="13" fill="#b8d0ea"/>
<path d="M68.5 10 H91.5 M68.5 16 H91.5 M68.5 22 H91.5 M74 4.5 V26.5 M80 4.5 V26.5 M86 4.5 V26.5" stroke="#8a8a8a" stroke-width="0.8"/>
<path d="M87 20 L96 11 L98 13 L89 22 Z" fill="#6d6d6d"/>
<path d="M79 31 Q80 24 86 22 L89 24.5 Q87 30 79 31 Z" fill="#3f7fc1"/>
<rect x="118.5" y="2.5" width="26" height="24" fill="#fff" stroke="#7a7a7a" stroke-width="0.9"/>
<rect x="123" y="7" width="16" height="11" fill="#b8d0ea"/>
<path d="M118.5 7 H144.5 M118.5 18 H144.5 M123 2.5 V26.5 M139 2.5 V26.5" stroke="#8a8a8a" stroke-width="0.8"/>
<path d="M138 20 L147 11 L149 13 L140 22 Z" fill="#6d6d6d"/>
<path d="M130 31 Q131 24 137 22 L140 24.5 Q138 30 130 31 Z" fill="#3f7fc1"/>
</svg>
<div style="left:984.00px;top:320px;font:400 12px/14px 'Liberation Sans',sans-serif;color:#3b3b3b;white-space:nowrap;letter-spacing:-0.005px;">Conditional</div>
<div style="left:982.50px;top:336px;font:400 12px/14px 'Liberation Sans',sans-serif;color:#3b3b3b;white-space:nowrap;letter-spacing:-0.260px;">Formatting</div>
<div style="left:1053.00px;top:320px;font:400 12px/14px 'Liberation Sans',sans-serif;color:#3b3b3b;white-space:nowrap;letter-spacing:-0.500px;">Format as</div>
<div style="left:1060.50px;top:336px;font:400 12px/14px 'Liberation Sans',sans-serif;color:#3b3b3b;white-space:nowrap;letter-spacing:-0.422px;">Table</div>
<div style="left:1117.80px;top:320px;font:400 12px/14px 'Liberation Sans',sans-serif;color:#3b3b3b;white-space:nowrap;letter-spacing:-0.229px;">Cell</div>
<div style="left:1108.00px;top:336px;font:400 12px/14px 'Liberation Sans',sans-serif;color:#3b3b3b;white-space:nowrap;letter-spacing:-0.534px;">Styles</div>
<svg style="left:1041px;top:340.5px" width="7" height="5" viewBox="0 0 7 5"><path d="M0.5 0.5 h5 l-2.5 3 z" fill="#666"/></svg>
<svg style="left:1090px;top:340.5px" width="7" height="5" viewBox="0 0 7 5"><path d="M0.5 0.5 h5 l-2.5 3 z" fill="#666"/></svg>
<svg style="left:1141.5px;top:340.5px" width="7" height="5" viewBox="0 0 7 5"><path d="M0.5 0.5 h5 l-2.5 3 z" fill="#666"/></svg>
<svg style="left:1176.5px;top:340.5px" width="7" height="5" viewBox="0 0 7 5"><path d="M0.5 0.5 h5 l-2.5 3 z" fill="#666"/></svg>
<svg style="left:1218.5px;top:340.5px" width="7" height="5" viewBox="0 0 7 5"><path d="M0.5 0.5 h5 l-2.5 3 z" fill="#666"/></svg>
<svg style="left:1261.4px;top:340.5px" width="7" height="5" viewBox="0 0 7 5"><path d="M0.5 0.5 h5 l-2.5 3 z" fill="#666"/></svg>
<svg style="left:1419.4px;top:340.5px" width="7" height="5" viewBox="0 0 7 5"><path d="M0.5 0.5 h5 l-2.5 3 z" fill="#666"/></svg>
<svg style="left:1464.3px;top:340.5px" width="7" height="5" viewBox="0 0 7 5"><path d="M0.5 0.5 h5 l-2.5 3 z" fill="#666"/></svg>
<svg style="left:1164px;top:283px" width="120" height="36" viewBox="0 0 120 36">
<g fill="#fff" stroke="#7a7a7a" stroke-width="1">
<rect x="4.5" y="4.5" width="7" height="5"/><rect x="11.5" y="4.5" width="7" height="5"/>
<rect x="4.5" y="22.5" width="7" height="5"/><rect x="11.5" y="22.5" width="7" height="5"/>
<rect x="4.5" y="27.5" width="7" height="5"/><rect x="11.5" y="27.5" width="7" height="5"/>
</g>
<rect x="13" y="13.5" width="7" height="5.5" fill="#b8d0ea" stroke="#7a7a7a" stroke-width="1"/><rect x="20" y="13.5" width="8" height="5.5" fill="#b8d0ea" stroke="#7a7a7a" stroke-width="1"/>
<path d="M11 16.2 H5 M7.5 13.5 L5 16.2 L7.5 19" stroke="#3f7fc1" stroke-width="1.6" fill="none"/>
<g fill="#fff" stroke="#7a7a7a" stroke-width="1">
<rect x="45.5" y="4.5" width="7" height="5"/><rect x="52.5" y="4.5" width="7" height="5"/>
<rect x="45.5" y="22.5" width="7" height="5"/><rect x="52.5" y="22.5" width="7" height="5"/>
<rect x="45.5" y="27.5" width="7" height="5"/><rect x="52.5" y="27.5" width="7" height="5"/>
</g>
<rect x="49" y="13.5" width="10" height="5.5" fill="#b8d0ea" stroke="#7a7a7a" stroke-width="1"/>
<path d="M61 11 L71.5 21.5 M71.5 11 L61 21.5" stroke="#e2673a" stroke-width="1.8"/>
<path d="M87 3.5 H112 M87 1 V6 M112 1 V6 M89.5 1.5 L87 3.5 L89.5 5.5 M109.5 1.5 L112 3.5 L109.5 5.5" stroke="#3f7fc1" stroke-width="1" fill="none"/>
<rect x="86.5" y="8.5" width="27" height="22" fill="#fff" stroke="#7a7a7a" stroke-width="1"/>
<path d="M86.5 15 H113.5 M86.5 23 H113.5 M93 8.5 V30.5 M100 8.5 V30.5 M107 8.5 V30.5" stroke="#9a9a9a" stroke-width="0.9"/>
<rect x="94" y="14" width="9" height="10" fill="#3f7fc1"/>
<path d="M87 31 V34 H94 L96 31" fill="none" stroke="#7a7a7a" stroke-width="1"/>
</svg>
<div style="left:1165.50px;top:320px;font:400 12px/14px 'Liberation Sans',sans-serif;color:#3b3b3b;white-space:nowrap;letter-spacing:-0.400px;">Insert</div>
<div style="left:1205.00px;top:320px;font:400 12px/14px 'Liberation Sans',sans-serif;color:#3b3b3b;white-space:nowrap;letter-spacing:-0.338px;">Delete</div>
<div style="left:1245.90px;top:320px;font:400 12px/14px 'Liberation Sans',sans-serif;color:#3b3b3b;white-space:nowrap;letter-spacing:-0.200px;">Format</div>
<svg style="left:1295px;top:283px" width="175" height="66" viewBox="0 0 175 66">
<path d="M17 3 H3.5 L10.5 10.5 L3.5 18 H17" fill="none" stroke="#505050" stroke-width="2.2"/>
<path d="M79 10 h5 l-2.5 3 z" fill="#5e5e5e"/>
<rect x="4.5" y="24.5" width="13" height="14" fill="#fff" stroke="#6d6d6d" stroke-width="1"/><rect x="4.5" y="24.5" width="13" height="2.5" fill="#6d6d6d"/>
<path d="M11 28.5 V36 M8 33 L11 36 L14 33" stroke="#3f7fc1" stroke-width="1.6" fill="none"/>
<path d="M40 31 h5 l-2.5 3 z M53 54 h5 l-2.5 3 z" fill="#5e5e5e"/>
<path d="M5 54 L11 47 L17 51.5 L12 58 H8 Z" fill="#ea8ea0"/><path d="M5 54 L8 58 H12" fill="none" stroke="#c9657a" stroke-width="1"/>
<path d="M12 59 H19" stroke="#6d6d6d" stroke-width="1"/>
<text x="98" y="16" font-family="Liberation Sans" font-size="13" font-weight="700" fill="#3f7fc1">A</text>
<text x="98" y="30" font-family="Liberation Sans" font-size="13" font-weight="700" fill="#9b59c6">Z</text>
<path d="M109 13 H126 L119.5 20 V28 H116 V20 Z" fill="#7a7a7a"/>
<circle cx="160" cy="11" r="8.5" fill="none" stroke="#3f7fc1" stroke-width="2.4"/>
<path d="M154 17 L145 26" stroke="#3f7fc1" stroke-width="3.2" stroke-linecap="round"/>
</svg>
<div style="left:1317.00px;top:286px;font:400 12px/14px 'Liberation Sans',sans-serif;color:#3b3b3b;white-space:nowrap;letter-spacing:0.109px;">AutoSum</div>
<div style="left:1317.00px;top:308px;font:400 12px/14px 'Liberation Sans',sans-serif;color:#3b3b3b;white-space:nowrap;letter-spacing:0.552px;">Fill</div>
<div style="left:1317.00px;top:331px;font:400 12px/14px 'Liberation Sans',sans-serif;color:#3b3b3b;white-space:nowrap;letter-spacing:-0.422px;">Clear</div>
<div style="left:1391.20px;top:320px;font:400 12px/14px 'Liberation Sans',sans-serif;color:#3b3b3b;white-space:nowrap;letter-spacing:-0.066px;">Sort &</div>
<div style="left:1391.00px;top:335px;font:400 12px/14px 'Liberation Sans',sans-serif;color:#3b3b3b;white-space:nowrap;letter-spacing:-0.134px;">Filter</div>
<div style="left:1433.50px;top:320px;font:400 12px/14px 'Liberation Sans',sans-serif;color:#3b3b3b;white-space:nowrap;letter-spacing:0.066px;">Find &</div>
<div style="left:1431.00px;top:335px;font:400 12px/14px 'Liberation Sans',sans-serif;color:#3b3b3b;white-space:nowrap;letter-spacing:-0.469px;">Select</div>
<div style="left:205px;top:371px;width:1357px;height:45px;background:#e6e6e6;"></div>
<div style="left:210px;top:381px;width:102px;height:26px;box-sizing:border-box;border:1px solid #c6c6c6;background:#fff;"></div>
<div style="left:217.50px;top:388px;font:400 12.5px/14px 'Liberation Sans',sans-serif;color:#262626;white-space:nowrap;">F6</div>
<svg style="left:296px;top:390px" width="10" height="6" viewBox="0 0 10 6"><path d="M1 0.5 h7 l-3.5 4 z" fill="#666"/></svg>
<svg style="left:324px;top:387px" width="5" height="15" viewBox="0 0 5 15"><circle cx="2.5" cy="2" r="1" fill="#9a9a9a"/><circle cx="2.5" cy="7" r="1" fill="#9a9a9a"/><circle cx="2.5" cy="12" r="1" fill="#9a9a9a"/></svg>
<div style="left:342px;top:381px;width:110px;height:26px;box-sizing:border-box;border:1px solid #c6c6c6;background:#fff;"></div>
<svg style="left:352px;top:385px" width="95" height="18" viewBox="0 0 95 18">
<path d="M4 4 L13 13 M13 4 L4 13" stroke="#b4b4b4" stroke-width="1.4"/>
<path d="M39 9 L43 13 L50 4" fill="none" stroke="#c4c4c4" stroke-width="1.8"/>
<text x="75" y="14" font-family="Liberation Serif" font-size="14" font-style="italic" font-weight="700" fill="#555">f</text>
<text x="80" y="14" font-family="Liberation Serif" font-size="10" font-style="italic" fill="#555">x</text>
</svg>
<div style="left:455px;top:381px;width:1102px;height:26px;box-sizing:border-box;border:1px solid #c6c6c6;background:#fff;"></div>
<div style="left:466.00px;top:388px;font:400 12.5px/14px 'Liberation Sans',sans-serif;color:#262626;white-space:nowrap;">TS</div>
<svg style="left:1543px;top:389px" width="12" height="8" viewBox="0 0 12 8"><path d="M1.5 1.5 L6 6 L10.5 1.5" fill="none" stroke="#555" stroke-width="1.3"/></svg>
<div style="left:205px;top:416px;width:1337px;height:17px;background:#e6e6e6;"></div>
<div style="left:205px;top:433px;width:25px;height:630px;background:#e6e6e6;"></div>
<div style="left:231px;top:434px;width:1310px;height:629px;background:#fff;"></div>
<div style="left:284px;top:434px;width:1px;height:629px;background:#dadada;"></div>
<div style="left:433px;top:434px;width:1px;height:629px;background:#dadada;"></div>
<div style="left:674px;top:434px;width:1px;height:629px;background:#dadada;"></div>
<div style="left:764px;top:434px;width:1px;height:629px;background:#dadada;"></div>
<div style="left:823px;top:434px;width:1px;height:629px;background:#dadada;"></div>
<div style="left:866px;top:434px;width:1px;height:629px;background:#dadada;"></div>
<div style="left:909px;top:434px;width:1px;height:629px;background:#dadada;"></div>
<div style="left:951px;top:434px;width:1px;height:629px;background:#dadada;"></div>
<div style="left:984px;top:434px;width:1px;height:629px;background:#dadada;"></div>
<div style="left:1017px;top:434px;width:1px;height:629px;background:#dadada;"></div>
<div style="left:1050px;top:434px;width:1px;height:629px;background:#dadada;"></div>
<div style="left:1083px;top:434px;width:1px;height:629px;background:#dadada;"></div>
<div style="left:1116px;top:434px;width:1px;height:629px;background:#dadada;"></div>
<div style="left:1149px;top:434px;width:1px;height:629px;background:#dadada;"></div>
<div style="left:1182px;top:434px;width:1px;height:629px;background:#dadada;"></div>
<div style="left:1215px;top:434px;width:1px;height:629px;background:#dadada;"></div>
<div style="left:1248px;top:434px;width:1px;height:629px;background:#dadada;"></div>
<div style="left:1281px;top:434px;width:1px;height:629px;background:#dadada;"></div>
<div style="left:1314px;top:434px;width:1px;height:629px;background:#dadada;"></div>
<div style="left:1347px;top:434px;width:1px;height:629px;background:#dadada;"></div>
<div style="left:1380px;top:434px;width:1px;height:629px;background:#dadada;"></div>
<div style="left:1413px;top:434px;width:1px;height:629px;background:#dadada;"></div>
<div style="left:1446px;top:434px;width:1px;height:629px;background:#dadada;"></div>
<div style="left:1479px;top:434px;width:1px;height:629px;background:#dadada;"></div>
<div style="left:1512px;top:434px;width:1px;height:629px;background:#dadada;"></div>
<div style="left:231px;top:450px;width:1310px;height:1px;background:#dadada;"></div>
<div style="left:231px;top:490px;width:1310px;height:1px;background:#dadada;"></div>
<div style="left:231px;top:514px;width:1310px;height:1px;background:#dadada;"></div>
<div style="left:231px;top:531px;width:1310px;height:1px;background:#dadada;"></div>
<div style="left:231px;top:550px;width:1310px;height:1px;background:#dadada;"></div>
<div style="left:231px;top:569px;width:1310px;height:1px;background:#dadada;"></div>
<div style="left:231px;top:586px;width:1310px;height:1px;background:#dadada;"></div>
<div style="left:231px;top:603px;width:1310px;height:1px;background:#dadada;"></div>
<div style="left:231px;top:620px;width:1310px;height:1px;background:#dadada;"></div>
<div style="left:231px;top:637px;width:1310px;height:1px;background:#dadada;"></div>
<div style="left:231px;top:654px;width:1310px;height:1px;background:#dadada;"></div>
<div style="left:231px;top:671px;width:1310px;height:1px;background:#dadada;"></div>
<div style="left:231px;top:688px;width:1310px;height:1px;background:#dadada;"></div>
<div style="left:231px;top:705px;width:1310px;height:1px;background:#dadada;"></div>
<div style="left:231px;top:722px;width:1310px;height:1px;background:#dadada;"></div>
<div style="left:231px;top:739px;width:1310px;height:1px;background:#dadada;"></div>
<div style="left:231px;top:756px;width:1310px;height:1px;background:#dadada;"></div>
<div style="left:231px;top:773px;width:1310px;height:1px;background:#dadada;"></div>
<div style="left:231px;top:790px;width:1310px;height:1px;background:#dadada;"></div>
<div style="left:231px;top:807px;width:1310px;height:1px;background:#dadada;"></div>
<div style="left:231px;top:824px;width:1310px;height:1px;background:#dadada;"></div>
<div style="left:231px;top:841px;width:1310px;height:1px;background:#dadada;"></div>
<div style="left:231px;top:858px;width:1310px;height:1px;background:#dadada;"></div>
<div style="left:231px;top:875px;width:1310px;height:1px;background:#dadada;"></div>
<div style="left:231px;top:892px;width:1310px;height:1px;background:#dadada;"></div>
<div style="left:231px;top:909px;width:1310px;height:1px;background:#dadada;"></div>
<div style="left:231px;top:926px;width:1310px;height:1px;background:#dadada;"></div>
<div style="left:231px;top:943px;width:1310px;height:1px;background:#dadada;"></div>
<div style="left:231px;top:960px;width:1310px;height:1px;background:#dadada;"></div>
<div style="left:231px;top:977px;width:1310px;height:1px;background:#dadada;"></div>
<div style="left:231px;top:994px;width:1310px;height:1px;background:#dadada;"></div>
<div style="left:231px;top:1011px;width:1310px;height:1px;background:#dadada;"></div>
<div style="left:231px;top:1028px;width:1310px;height:1px;background:#dadada;"></div>
<div style="left:231px;top:1045px;width:1310px;height:1px;background:#dadada;"></div>
<div style="left:231px;top:1062px;width:1310px;height:1px;background:#dadada;"></div>
<div style="left:205px;top:433px;width:1337px;height:1px;background:#ababab;"></div>
<div style="left:230px;top:416px;width:1px;height:647px;background:#ababab;"></div>
<div style="left:284px;top:418px;width:1px;height:15px;background:linear-gradient(#e6e6e6,#bdbdbd);"></div>
<div style="left:433px;top:418px;width:1px;height:15px;background:linear-gradient(#e6e6e6,#bdbdbd);"></div>
<div style="left:674px;top:418px;width:1px;height:15px;background:linear-gradient(#e6e6e6,#bdbdbd);"></div>
<div style="left:764px;top:418px;width:1px;height:15px;background:linear-gradient(#e6e6e6,#bdbdbd);"></div>
<div style="left:823px;top:418px;width:1px;height:15px;background:linear-gradient(#e6e6e6,#bdbdbd);"></div>
<div style="left:866px;top:418px;width:1px;height:15px;background:linear-gradient(#e6e6e6,#bdbdbd);"></div>
<div style="left:909px;top:418px;width:1px;height:15px;background:linear-gradient(#e6e6e6,#bdbdbd);"></div>
<div style="left:951px;top:418px;width:1px;height:15px;background:linear-gradient(#e6e6e6,#bdbdbd);"></div>
<div style="left:984px;top:418px;width:1px;height:15px;background:linear-gradient(#e6e6e6,#bdbdbd);"></div>
<div style="left:1017px;top:418px;width:1px;height:15px;background:linear-gradient(#e6e6e6,#bdbdbd);"></div>
<div style="left:1050px;top:418px;width:1px;height:15px;background:linear-gradient(#e6e6e6,#bdbdbd);"></div>
<div style="left:1083px;top:418px;width:1px;height:15px;background:linear-gradient(#e6e6e6,#bdbdbd);"></div>
<div style="left:1116px;top:418px;width:1px;height:15px;background:linear-gradient(#e6e6e6,#bdbdbd);"></div>
<div style="left:1149px;top:418px;width:1px;height:15px;background:linear-gradient(#e6e6e6,#bdbdbd);"></div>
<div style="left:1182px;top:418px;width:1px;height:15px;background:linear-gradient(#e6e6e6,#bdbdbd);"></div>
<div style="left:1215px;top:418px;width:1px;height:15px;background:linear-gradient(#e6e6e6,#bdbdbd);"></div>
<div style="left:1248px;top:418px;width:1px;height:15px;background:linear-gradient(#e6e6e6,#bdbdbd);"></div>
<div style="left:1281px;top:418px;width:1px;height:15px;background:linear-gradient(#e6e6e6,#bdbdbd);"></div>
<div style="left:1314px;top:418px;width:1px;height:15px;background:linear-gradient(#e6e6e6,#bdbdbd);"></div>
<div style="left:1347px;top:418px;width:1px;height:15px;background:linear-gradient(#e6e6e6,#bdbdbd);"></div>
<div style="left:1380px;top:418px;width:1px;height:15px;background:linear-gradient(#e6e6e6,#bdbdbd);"></div>
<div style="left:1413px;top:418px;width:1px;height:15px;background:linear-gradient(#e6e6e6,#bdbdbd);"></div>
<div style="left:1446px;top:418px;width:1px;height:15px;background:linear-gradient(#e6e6e6,#bdbdbd);"></div>
<div style="left:1479px;top:418px;width:1px;height:15px;background:linear-gradient(#e6e6e6,#bdbdbd);"></div>
<div style="left:1512px;top:418px;width:1px;height:15px;background:linear-gradient(#e6e6e6,#bdbdbd);"></div>
<div style="left:1541px;top:416px;width:1px;height:647px;background:#ababab;"></div>
<div style="left:205px;top:450px;width:25px;height:1px;background:#c8c8c8;"></div>
<div style="left:205px;top:490px;width:25px;height:1px;background:#c8c8c8;"></div>
<div style="left:205px;top:514px;width:25px;height:1px;background:#c8c8c8;"></div>
<div style="left:205px;top:531px;width:25px;height:1px;background:#c8c8c8;"></div>
<div style="left:205px;top:550px;width:25px;height:1px;background:#c8c8c8;"></div>
<div style="left:205px;top:569px;width:25px;height:1px;background:#c8c8c8;"></div>
<div style="left:205px;top:586px;width:25px;height:1px;background:#c8c8c8;"></div>
<div style="left:205px;top:603px;width:25px;height:1px;background:#c8c8c8;"></div>
<div style="left:205px;top:620px;width:25px;height:1px;background:#c8c8c8;"></div>
<div style="left:205px;top:637px;width:25px;height:1px;background:#c8c8c8;"></div>
<div style="left:205px;top:654px;width:25px;height:1px;background:#c8c8c8;"></div>
<div style="left:205px;top:671px;width:25px;height:1px;background:#c8c8c8;"></div>
<div style="left:205px;top:688px;width:25px;height:1px;background:#c8c8c8;"></div>
<div style="left:205px;top:705px;width:25px;height:1px;background:#c8c8c8;"></div>
<div style="left:205px;top:722px;width:25px;height:1px;background:#c8c8c8;"></div>
<div style="left:205px;top:739px;width:25px;height:1px;background:#c8c8c8;"></div>
<div style="left:205px;top:756px;width:25px;height:1px;background:#c8c8c8;"></div>
<div style="left:205px;top:773px;width:25px;height:1px;background:#c8c8c8;"></div>
<div style="left:205px;top:790px;width:25px;height:1px;background:#c8c8c8;"></div>
<div style="left:205px;top:807px;width:25px;height:1px;background:#c8c8c8;"></div>
<div style="left:205px;top:824px;width:25px;height:1px;background:#c8c8c8;"></div>
<div style="left:205px;top:841px;width:25px;height:1px;background:#c8c8c8;"></div>
<div style="left:205px;top:858px;width:25px;height:1px;background:#c8c8c8;"></div>
<div style="left:205px;top:875px;width:25px;height:1px;background:#c8c8c8;"></div>
<div style="left:205px;top:892px;width:25px;height:1px;background:#c8c8c8;"></div>
<div style="left:205px;top:909px;width:25px;height:1px;background:#c8c8c8;"></div>
<div style="left:205px;top:926px;width:25px;height:1px;background:#c8c8c8;"></div>
<div style="left:205px;top:943px;width:25px;height:1px;background:#c8c8c8;"></div>
<div style="left:205px;top:960px;width:25px;height:1px;background:#c8c8c8;"></div>
<div style="left:205px;top:977px;width:25px;height:1px;background:#c8c8c8;"></div>
<div style="left:205px;top:994px;width:25px;height:1px;background:#c8c8c8;"></div>
<div style="left:205px;top:1011px;width:25px;height:1px;background:#c8c8c8;"></div>
<div style="left:205px;top:1028px;width:25px;height:1px;background:#c8c8c8;"></div>
<div style="left:205px;top:1045px;width:25px;height:1px;background:#c8c8c8;"></div>
<div style="left:205px;top:1062px;width:25px;height:1px;background:#c8c8c8;"></div>
<div style="left:824px;top:416px;width:42px;height:17px;background:#d2d2d2;"></div>
<div style="left:824px;top:431px;width:42px;height:2px;background:#217346;"></div>
<div style="left:205px;top:551px;width:25px;height:18px;background:#d6d6d6;"></div>
<div style="left:229px;top:550px;width:2px;height:20px;background:#217346;"></div>
<svg style="left:214px;top:420px" width="12" height="12" viewBox="0 0 12 12"><path d="M11 1 V11 H1 Z" fill="#b9b9b9"/></svg>
<div style="left:252.83px;top:417px;font:400 14px/16px 'Liberation Sans',sans-serif;color:#1f1f1f;white-space:nowrap;">A</div>
<div style="left:354.33px;top:417px;font:400 14px/16px 'Liberation Sans',sans-serif;color:#1f1f1f;white-space:nowrap;">B</div>
<div style="left:548.95px;top:417px;font:400 14px/16px 'Liberation Sans',sans-serif;color:#1f1f1f;white-space:nowrap;">C</div>
<div style="left:714.45px;top:417px;font:400 14px/16px 'Liberation Sans',sans-serif;color:#1f1f1f;white-space:nowrap;">D</div>
<div style="left:789.33px;top:417px;font:400 14px/16px 'Liberation Sans',sans-serif;color:#1f1f1f;white-space:nowrap;">E</div>
<div style="left:840.73px;top:417px;font:400 14px/16px 'Liberation Sans',sans-serif;color:#1d6b40;white-space:nowrap;">F</div>
<div style="left:882.55px;top:417px;font:400 14px/16px 'Liberation Sans',sans-serif;color:#1f1f1f;white-space:nowrap;">G</div>
<div style="left:925.45px;top:417px;font:400 14px/16px 'Liberation Sans',sans-serif;color:#1f1f1f;white-space:nowrap;">H</div>
<div style="left:962.95px;top:417px;font:400 14px/16px 'Liberation Sans',sans-serif;color:#1f1f1f;white-space:nowrap;">U</div>
<div style="left:996.33px;top:417px;font:400 14px/16px 'Liberation Sans',sans-serif;color:#1f1f1f;white-space:nowrap;">V</div>
<div style="left:1027.39px;top:417px;font:400 14px/16px 'Liberation Sans',sans-serif;color:#1f1f1f;white-space:nowrap;">W</div>
<div style="left:1062.33px;top:417px;font:400 14px/16px 'Liberation Sans',sans-serif;color:#1f1f1f;white-space:nowrap;">X</div>
<div style="left:1095.33px;top:417px;font:400 14px/16px 'Liberation Sans',sans-serif;color:#1f1f1f;white-space:nowrap;">Y</div>
<div style="left:1128.73px;top:417px;font:400 14px/16px 'Liberation Sans',sans-serif;color:#1f1f1f;white-space:nowrap;">Z</div>
<div style="left:1156.66px;top:417px;font:400 14px/16px 'Liberation Sans',sans-serif;color:#1f1f1f;white-space:nowrap;">AA</div>
<div style="left:1189.66px;top:417px;font:400 14px/16px 'Liberation Sans',sans-serif;color:#1f1f1f;white-space:nowrap;">AB</div>
<div style="left:1222.27px;top:417px;font:400 14px/16px 'Liberation Sans',sans-serif;color:#1f1f1f;white-space:nowrap;">AC</div>
<div style="left:1255.27px;top:417px;font:400 14px/16px 'Liberation Sans',sans-serif;color:#1f1f1f;white-space:nowrap;">AD</div>
<div style="left:1288.66px;top:417px;font:400 14px/16px 'Liberation Sans',sans-serif;color:#1f1f1f;white-space:nowrap;">AE</div>
<div style="left:1322.05px;top:417px;font:400 14px/16px 'Liberation Sans',sans-serif;color:#1f1f1f;white-space:nowrap;">AF</div>
<div style="left:1353.88px;top:417px;font:400 14px/16px 'Liberation Sans',sans-serif;color:#1f1f1f;white-space:nowrap;">AG</div>
<div style="left:1387.27px;top:417px;font:400 14px/16px 'Liberation Sans',sans-serif;color:#1f1f1f;white-space:nowrap;">AH</div>
<div style="left:1423.38px;top:417px;font:400 14px/16px 'Liberation Sans',sans-serif;color:#1f1f1f;white-space:nowrap;">AI</div>
<div style="left:1454.83px;top:417px;font:400 14px/16px 'Liberation Sans',sans-serif;color:#1f1f1f;white-space:nowrap;">AJ</div>
<div style="left:1486.66px;top:417px;font:400 14px/16px 'Liberation Sans',sans-serif;color:#1f1f1f;white-space:nowrap;">AK</div>
<div style="left:1518.44px;top:417px;font:400 14px/16px 'Liberation Sans',sans-serif;color:#1f1f1f;white-space:nowrap;">AL</div>
<div style="left:213.61px;top:434px;font:400 14px/16px 'Liberation Sans',sans-serif;color:#1f1f1f;white-space:nowrap;">1</div>
<div style="left:213.61px;top:474px;font:400 14px/16px 'Liberation Sans',sans-serif;color:#1f1f1f;white-space:nowrap;">2</div>
<div style="left:213.61px;top:498px;font:400 14px/16px 'Liberation Sans',sans-serif;color:#1f1f1f;white-space:nowrap;">3</div>
<div style="left:213.61px;top:515px;font:400 14px/16px 'Liberation Sans',sans-serif;color:#1f1f1f;white-space:nowrap;">4</div>
<div style="left:213.61px;top:534px;font:400 14px/16px 'Liberation Sans',sans-serif;color:#1f1f1f;white-space:nowrap;">5</div>
<div style="left:213.61px;top:553px;font:400 14px/16px 'Liberation Sans',sans-serif;color:#1d6b40;white-space:nowrap;">6</div>
<div style="left:213.61px;top:570px;font:400 14px/16px 'Liberation Sans',sans-serif;color:#1f1f1f;white-space:nowrap;">7</div>
<div style="left:213.61px;top:587px;font:400 14px/16px 'Liberation Sans',sans-serif;color:#1f1f1f;white-space:nowrap;">8</div>
<div style="left:213.61px;top:604px;font:400 14px/16px 'Liberation Sans',sans-serif;color:#1f1f1f;white-space:nowrap;">9</div>
<div style="left:209.72px;top:621px;font:400 14px/16px 'Liberation Sans',sans-serif;color:#1f1f1f;white-space:nowrap;">10</div>
<div style="left:210.23px;top:638px;font:400 14px/16px 'Liberation Sans',sans-serif;color:#1f1f1f;white-space:nowrap;">11</div>
<div style="left:209.72px;top:655px;font:400 14px/16px 'Liberation Sans',sans-serif;color:#1f1f1f;white-space:nowrap;">12</div>
<div style="left:209.72px;top:672px;font:400 14px/16px 'Liberation Sans',sans-serif;color:#1f1f1f;white-space:nowrap;">13</div>
<div style="left:209.72px;top:689px;font:400 14px/16px 'Liberation Sans',sans-serif;color:#1f1f1f;white-space:nowrap;">14</div>
<div style="left:209.72px;top:706px;font:400 14px/16px 'Liberation Sans',sans-serif;color:#1f1f1f;white-space:nowrap;">15</div>
<div style="left:209.72px;top:723px;font:400 14px/16px 'Liberation Sans',sans-serif;color:#1f1f1f;white-space:nowrap;">16</div>
<div style="left:209.72px;top:740px;font:400 14px/16px 'Liberation Sans',sans-serif;color:#1f1f1f;white-space:nowrap;">17</div>
<div style="left:209.72px;top:757px;font:400 14px/16px 'Liberation Sans',sans-serif;color:#1f1f1f;white-space:nowrap;">18</div>
<div style="left:209.72px;top:774px;font:400 14px/16px 'Liberation Sans',sans-serif;color:#1f1f1f;white-space:nowrap;">19</div>
<div style="left:209.72px;top:791px;font:400 14px/16px 'Liberation Sans',sans-serif;color:#1f1f1f;white-space:nowrap;">20</div>
<div style="left:209.72px;top:808px;font:400 14px/16px 'Liberation Sans',sans-serif;color:#1f1f1f;white-space:nowrap;">21</div>
<div style="left:209.72px;top:825px;font:400 14px/16px 'Liberation Sans',sans-serif;color:#1f1f1f;white-space:nowrap;">22</div>
<div style="left:209.72px;top:842px;font:400 14px/16px 'Liberation Sans',sans-serif;color:#1f1f1f;white-space:nowrap;">23</div>
<div style="left:209.72px;top:859px;font:400 14px/16px 'Liberation Sans',sans-serif;color:#1f1f1f;white-space:nowrap;">24</div>
<div style="left:209.72px;top:876px;font:400 14px/16px 'Liberation Sans',sans-serif;color:#1f1f1f;white-space:nowrap;">25</div>
<div style="left:209.72px;top:893px;font:400 14px/16px 'Liberation Sans',sans-serif;color:#1f1f1f;white-space:nowrap;">26</div>
<div style="left:209.72px;top:910px;font:400 14px/16px 'Liberation Sans',sans-serif;color:#1f1f1f;white-space:nowrap;">27</div>
<div style="left:209.72px;top:927px;font:400 14px/16px 'Liberation Sans',sans-serif;color:#1f1f1f;white-space:nowrap;">28</div>
<div style="left:209.72px;top:944px;font:400 14px/16px 'Liberation Sans',sans-serif;color:#1f1f1f;white-space:nowrap;">29</div>
<div style="left:209.72px;top:961px;font:400 14px/16px 'Liberation Sans',sans-serif;color:#1f1f1f;white-space:nowrap;">30</div>
<div style="left:209.72px;top:978px;font:400 14px/16px 'Liberation Sans',sans-serif;color:#1f1f1f;white-space:nowrap;">31</div>
<div style="left:209.72px;top:995px;font:400 14px/16px 'Liberation Sans',sans-serif;color:#1f1f1f;white-space:nowrap;">32</div>
<div style="left:209.72px;top:1012px;font:400 14px/16px 'Liberation Sans',sans-serif;color:#1f1f1f;white-space:nowrap;">33</div>
<div style="left:209.72px;top:1029px;font:400 14px/16px 'Liberation Sans',sans-serif;color:#1f1f1f;white-space:nowrap;">34</div>
<div style="left:209.72px;top:1046px;font:400 14px/16px 'Liberation Sans',sans-serif;color:#1f1f1f;white-space:nowrap;">35</div>
<div style="left:231px;top:532px;width:1310px;height:37px;background:#d3d3d3;"></div>
<div style="left:234.00px;top:458px;font:700 25px/27px 'Liberation Serif',serif;color:#000;white-space:nowrap;letter-spacing:-0.618px;">Điểm danh tháng 5/2022</div>
<div style="left:234.00px;top:494px;font:700 16px/17px 'Liberation Serif',serif;color:#000;white-space:nowrap;letter-spacing:-0.356px;">Lớp: Mầm 1</div>
<div style="left:244.00px;top:543px;font:700 14.67px/16px 'Liberation Serif',serif;color:#000;white-space:nowrap;letter-spacing:-0.359px;">STT</div>
<div style="left:319.00px;top:544px;font:700 14.67px/16px 'Liberation Serif',serif;color:#000;white-space:nowrap;letter-spacing:0.342px;">Mã học sinh</div>
<div style="left:522.20px;top:544px;font:700 14.67px/16px 'Liberation Serif',serif;color:#000;white-space:nowrap;letter-spacing:0.417px;">Họ và tên</div>
<div style="left:688.00px;top:544px;font:700 14.67px/16px 'Liberation Serif',serif;color:#000;white-space:nowrap;letter-spacing:0.209px;">Ngày sinh</div>
<div style="left:769.20px;top:534px;font:700 14.67px/16px 'Liberation Serif',serif;color:#000;white-space:nowrap;letter-spacing:0.051px;">Số ngày</div>
<div style="left:775.30px;top:553px;font:700 14.67px/16px 'Liberation Serif',serif;color:#000;white-space:nowrap;letter-spacing:0.062px;">đi học</div>
<div style="left:838.00px;top:534px;font:700 14.67px/16px 'Liberation Serif',serif;color:#000;white-space:nowrap;letter-spacing:0.093px;">Tổng ngày nghỉ</div>
<div style="left:836.03px;top:554px;font:700 14.67px/16px 'Liberation Serif',serif;color:#000;white-space:nowrap;">TS</div>
<div style="left:883.02px;top:554px;font:700 14.67px/16px 'Liberation Serif',serif;color:#000;white-space:nowrap;">P</div>
<div style="left:924.30px;top:554px;font:700 14.67px/16px 'Liberation Serif',serif;color:#000;white-space:nowrap;">K</div>
<div style="left:960.52px;top:533px;font:400 14px/16px 'Liberation Sans',sans-serif;color:#000;white-space:nowrap;letter-spacing:-0.600px;">13</div>
<div style="left:960.14px;top:552px;font:400 14px/16px 'Liberation Sans',sans-serif;color:#000;white-space:nowrap;letter-spacing:-0.600px;">T6</div>
<div style="left:993.52px;top:533px;font:400 14px/16px 'Liberation Sans',sans-serif;color:#000;white-space:nowrap;letter-spacing:-0.600px;">14</div>
<div style="left:993.14px;top:552px;font:400 14px/16px 'Liberation Sans',sans-serif;color:#000;white-space:nowrap;letter-spacing:-0.600px;">T7</div>
<div style="left:1026.52px;top:533px;font:400 14px/16px 'Liberation Sans',sans-serif;color:#000;white-space:nowrap;letter-spacing:-0.600px;">15</div>
<div style="left:1024.19px;top:552px;font:400 14px/16px 'Liberation Sans',sans-serif;color:#000;white-space:nowrap;letter-spacing:-0.600px;">CN</div>
<div style="left:1059.52px;top:533px;font:400 14px/16px 'Liberation Sans',sans-serif;color:#000;white-space:nowrap;letter-spacing:-0.600px;">16</div>
<div style="left:1059.14px;top:552px;font:400 14px/16px 'Liberation Sans',sans-serif;color:#000;white-space:nowrap;letter-spacing:-0.600px;">T2</div>
<div style="left:1092.52px;top:533px;font:400 14px/16px 'Liberation Sans',sans-serif;color:#000;white-space:nowrap;letter-spacing:-0.600px;">17</div>
<div style="left:1092.14px;top:552px;font:400 14px/16px 'Liberation Sans',sans-serif;color:#000;white-space:nowrap;letter-spacing:-0.600px;">T3</div>
<div style="left:1125.52px;top:533px;font:400 14px/16px 'Liberation Sans',sans-serif;color:#000;white-space:nowrap;letter-spacing:-0.600px;">18</div>
<div style="left:1125.14px;top:552px;font:400 14px/16px 'Liberation Sans',sans-serif;color:#000;white-space:nowrap;letter-spacing:-0.600px;">T4</div>
<div style="left:1158.52px;top:533px;font:400 14px/16px 'Liberation Sans',sans-serif;color:#000;white-space:nowrap;letter-spacing:-0.600px;">19</div>
<div style="left:1158.14px;top:552px;font:400 14px/16px 'Liberation Sans',sans-serif;color:#000;white-space:nowrap;letter-spacing:-0.600px;">T5</div>
<div style="left:1191.52px;top:533px;font:400 14px/16px 'Liberation Sans',sans-serif;color:#000;white-space:nowrap;letter-spacing:-0.600px;">20</div>
<div style="left:1191.14px;top:552px;font:400 14px/16px 'Liberation Sans',sans-serif;color:#000;white-space:nowrap;letter-spacing:-0.600px;">T6</div>
<div style="left:1224.52px;top:533px;font:400 14px/16px 'Liberation Sans',sans-serif;color:#000;white-space:nowrap;letter-spacing:-0.600px;">21</div>
<div style="left:1224.14px;top:552px;font:400 14px/16px 'Liberation Sans',sans-serif;color:#000;white-space:nowrap;letter-spacing:-0.600px;">T7</div>
<div style="left:1257.52px;top:533px;font:400 14px/16px 'Liberation Sans',sans-serif;color:#000;white-space:nowrap;letter-spacing:-0.600px;">22</div>
<div style="left:1255.19px;top:552px;font:400 14px/16px 'Liberation Sans',sans-serif;color:#000;white-space:nowrap;letter-spacing:-0.600px;">CN</div>
<div style="left:1290.52px;top:533px;font:400 14px/16px 'Liberation Sans',sans-serif;color:#000;white-space:nowrap;letter-spacing:-0.600px;">23</div>
<div style="left:1290.14px;top:552px;font:400 14px/16px 'Liberation Sans',sans-serif;color:#000;white-space:nowrap;letter-spacing:-0.600px;">T2</div>
<div style="left:1323.52px;top:533px;font:400 14px/16px 'Liberation Sans',sans-serif;color:#000;white-space:nowrap;letter-spacing:-0.600px;">24</div>
<div style="left:1323.14px;top:552px;font:400 14px/16px 'Liberation Sans',sans-serif;color:#000;white-space:nowrap;letter-spacing:-0.600px;">T3</div>
<div style="left:1356.52px;top:533px;font:400 14px/16px 'Liberation Sans',sans-serif;color:#000;white-space:nowrap;letter-spacing:-0.600px;">25</div>
<div style="left:1356.14px;top:552px;font:400 14px/16px 'Liberation Sans',sans-serif;color:#000;white-space:nowrap;letter-spacing:-0.600px;">T4</div>
<div style="left:1389.52px;top:533px;font:400 14px/16px 'Liberation Sans',sans-serif;color:#000;white-space:nowrap;letter-spacing:-0.600px;">26</div>
<div style="left:1389.14px;top:552px;font:400 14px/16px 'Liberation Sans',sans-serif;color:#000;white-space:nowrap;letter-spacing:-0.600px;">T5</div>
<div style="left:1422.52px;top:533px;font:400 14px/16px 'Liberation Sans',sans-serif;color:#000;white-space:nowrap;letter-spacing:-0.600px;">27</div>
<div style="left:1422.14px;top:552px;font:400 14px/16px 'Liberation Sans',sans-serif;color:#000;white-space:nowrap;letter-spacing:-0.600px;">T6</div>
<div style="left:1455.52px;top:533px;font:400 14px/16px 'Liberation Sans',sans-serif;color:#000;white-space:nowrap;letter-spacing:-0.600px;">28</div>
<div style="left:1455.14px;top:552px;font:400 14px/16px 'Liberation Sans',sans-serif;color:#000;white-space:nowrap;letter-spacing:-0.600px;">T7</div>
<div style="left:1488.52px;top:533px;font:400 14px/16px 'Liberation Sans',sans-serif;color:#000;white-space:nowrap;letter-spacing:-0.600px;">29</div>
<div style="left:1486.19px;top:552px;font:400 14px/16px 'Liberation Sans',sans-serif;color:#000;white-space:nowrap;letter-spacing:-0.600px;">CN</div>
<div style="left:1519.52px;top:533px;font:400 14px/16px 'Liberation Sans',sans-serif;color:#000;white-space:nowrap;letter-spacing:-0.600px;">30</div>
<div style="left:1519.14px;top:552px;font:400 14px/16px 'Liberation Sans',sans-serif;color:#000;white-space:nowrap;letter-spacing:-0.600px;">T2</div>
<div style="left:253.61px;top:570px;font:400 14px/16px 'Liberation Sans',sans-serif;color:#000;white-space:nowrap;letter-spacing:-0.600px;">1</div>
<div style="left:287.50px;top:570px;font:400 14px/16px 'Liberation Sans',sans-serif;color:#000;white-space:nowrap;letter-spacing:-0.800px;">MS01015024</div>
<div style="left:436.00px;top:570px;font:400 14px/16px 'Liberation Sans',sans-serif;color:#000;white-space:nowrap;letter-spacing:-0.600px;">Đinh Việt Trung</div>
<div style="left:687.68px;top:570px;font:400 14px/16px 'Liberation Sans',sans-serif;color:#000;white-space:nowrap;letter-spacing:-0.600px;">20/06/2022</div>
<div style="left:806.04px;top:570px;font:400 14px/16px 'Liberation Sans',sans-serif;color:#000;white-space:nowrap;letter-spacing:-0.600px;">21</div>
<div style="left:856.22px;top:570px;font:700 14px/16px 'Liberation Sans',sans-serif;color:#000;white-space:nowrap;">1</div>
<div style="left:941.22px;top:570px;font:400 14px/16px 'Liberation Sans',sans-serif;color:#000;white-space:nowrap;">1</div>
<div style="left:954.50px;top:570px;font:400 14px/16px 'Liberation Sans',sans-serif;color:#000;white-space:nowrap;">+</div>
<div style="left:1053.50px;top:570px;font:400 14px/16px 'Liberation Sans',sans-serif;color:#000;white-space:nowrap;">+</div>
<div style="left:1086.50px;top:570px;font:400 14px/16px 'Liberation Sans',sans-serif;color:#000;white-space:nowrap;">+</div>
<div style="left:1119.50px;top:570px;font:400 14px/16px 'Liberation Sans',sans-serif;color:#000;white-space:nowrap;">K</div>
<div style="left:1152.50px;top:570px;font:400 14px/16px 'Liberation Sans',sans-serif;color:#000;white-space:nowrap;">+</div>
<div style="left:1185.50px;top:570px;font:400 14px/16px 'Liberation Sans',sans-serif;color:#000;white-space:nowrap;">+</div>
<div style="left:1284.50px;top:570px;font:400 14px/16px 'Liberation Sans',sans-serif;color:#000;white-space:nowrap;">+</div>
<div style="left:1317.50px;top:570px;font:400 14px/16px 'Liberation Sans',sans-serif;color:#000;white-space:nowrap;">+</div>
<div style="left:1350.50px;top:570px;font:400 14px/16px 'Liberation Sans',sans-serif;color:#000;white-space:nowrap;">+</div>
<div style="left:1383.50px;top:570px;font:400 14px/16px 'Liberation Sans',sans-serif;color:#000;white-space:nowrap;">+</div>
<div style="left:1416.50px;top:570px;font:400 14px/16px 'Liberation Sans',sans-serif;color:#000;white-space:nowrap;">+</div>
<div style="left:1515.50px;top:570px;font:400 14px/16px 'Liberation Sans',sans-serif;color:#000;white-space:nowrap;">+</div>
<div style="left:253.61px;top:587px;font:400 14px/16px 'Liberation Sans',sans-serif;color:#000;white-space:nowrap;letter-spacing:-0.600px;">2</div>
<div style="left:287.50px;top:587px;font:400 14px/16px 'Liberation Sans',sans-serif;color:#000;white-space:nowrap;letter-spacing:-0.800px;">MS01015012</div>
<div style="left:436.00px;top:587px;font:400 14px/16px 'Liberation Sans',sans-serif;color:#000;white-space:nowrap;letter-spacing:-0.600px;">Đỗ Thu Ngân</div>
<div style="left:687.68px;top:587px;font:400 14px/16px 'Liberation Sans',sans-serif;color:#000;white-space:nowrap;letter-spacing:-0.600px;">14/03/2022</div>
<div style="left:806.04px;top:587px;font:400 14px/16px 'Liberation Sans',sans-serif;color:#000;white-space:nowrap;letter-spacing:-0.600px;">21</div>
<div style="left:856.22px;top:587px;font:700 14px/16px 'Liberation Sans',sans-serif;color:#000;white-space:nowrap;">1</div>
<div style="left:898.22px;top:587px;font:400 14px/16px 'Liberation Sans',sans-serif;color:#000;white-space:nowrap;">1</div>
<div style="left:954.50px;top:587px;font:400 14px/16px 'Liberation Sans',sans-serif;color:#000;white-space:nowrap;">+</div>
<div style="left:1053.50px;top:587px;font:400 14px/16px 'Liberation Sans',sans-serif;color:#000;white-space:nowrap;">+</div>
<div style="left:1086.50px;top:587px;font:400 14px/16px 'Liberation Sans',sans-serif;color:#000;white-space:nowrap;">+</div>
<div style="left:1119.50px;top:587px;font:400 14px/16px 'Liberation Sans',sans-serif;color:#000;white-space:nowrap;">P</div>
<div style="left:1152.50px;top:587px;font:400 14px/16px 'Liberation Sans',sans-serif;color:#000;white-space:nowrap;">+</div>
<div style="left:1185.50px;top:587px;font:400 14px/16px 'Liberation Sans',sans-serif;color:#000;white-space:nowrap;">+</div>
<div style="left:1284.50px;top:587px;font:400 14px/16px 'Liberation Sans',sans-serif;color:#000;white-space:nowrap;">+</div>
<div style="left:1317.50px;top:587px;font:400 14px/16px 'Liberation Sans',sans-serif;color:#000;white-space:nowrap;">+</div>
<div style="left:1350.50px;top:587px;font:400 14px/16px 'Liberation Sans',sans-serif;color:#000;white-space:nowrap;">+</div>
<div style="left:1383.50px;top:587px;font:400 14px/16px 'Liberation Sans',sans-serif;color:#000;white-space:nowrap;">+</div>
<div style="left:1416.50px;top:587px;font:400 14px/16px 'Liberation Sans',sans-serif;color:#000;white-space:nowrap;">+</div>
<div style="left:1515.50px;top:587px;font:400 14px/16px 'Liberation Sans',sans-serif;color:#000;white-space:nowrap;">+</div>
<div style="left:253.61px;top:604px;font:400 14px/16px 'Liberation Sans',sans-serif;color:#000;white-space:nowrap;letter-spacing:-0.600px;">3</div>
<div style="left:287.50px;top:604px;font:400 14px/16px 'Liberation Sans',sans-serif;color:#000;white-space:nowrap;letter-spacing:-0.800px;">MS01015014</div>
<div style="left:436.00px;top:604px;font:400 14px/16px 'Liberation Sans',sans-serif;color:#000;white-space:nowrap;letter-spacing:-0.600px;">Lê Bảo Ngọc</div>
<div style="left:687.68px;top:604px;font:400 14px/16px 'Liberation Sans',sans-serif;color:#000;white-space:nowrap;letter-spacing:-0.600px;">12/07/2021</div>
<div style="left:806.04px;top:604px;font:400 14px/16px 'Liberation Sans',sans-serif;color:#000;white-space:nowrap;letter-spacing:-0.600px;">22</div>
<div style="left:954.50px;top:604px;font:400 14px/16px 'Liberation Sans',sans-serif;color:#000;white-space:nowrap;">+</div>
<div style="left:1053.50px;top:604px;font:400 14px/16px 'Liberation Sans',sans-serif;color:#000;white-space:nowrap;">+</div>
<div style="left:1086.50px;top:604px;font:400 14px/16px 'Liberation Sans',sans-serif;color:#000;white-space:nowrap;">+</div>
<div style="left:1119.50px;top:604px;font:400 14px/16px 'Liberation Sans',sans-serif;color:#000;white-space:nowrap;">+</div>
<div style="left:1152.50px;top:604px;font:400 14px/16px 'Liberation Sans',sans-serif;color:#000;white-space:nowrap;">+</div>
<div style="left:1185.50px;top:604px;font:400 14px/16px 'Liberation Sans',sans-serif;color:#000;white-space:nowrap;">+</div>
<div style="left:1284.50px;top:604px;font:400 14px/16px 'Liberation Sans',sans-serif;color:#000;white-space:nowrap;">+</div>
<div style="left:1317.50px;top:604px;font:400 14px/16px 'Liberation Sans',sans-serif;color:#000;white-space:nowrap;">+</div>
<div style="left:1350.50px;top:604px;font:400 14px/16px 'Liberation Sans',sans-serif;color:#000;white-space:nowrap;">+</div>
<div style="left:1383.50px;top:604px;font:400 14px/16px 'Liberation Sans',sans-serif;color:#000;white-space:nowrap;">+</div>
<div style="left:1416.50px;top:604px;font:400 14px/16px 'Liberation Sans',sans-serif;color:#000;white-space:nowrap;">+</div>
<div style="left:1515.50px;top:604px;font:400 14px/16px 'Liberation Sans',sans-serif;color:#000;white-space:nowrap;">+</div>
<div style="left:253.61px;top:621px;font:400 14px/16px 'Liberation Sans',sans-serif;color:#000;white-space:nowrap;letter-spacing:-0.600px;">4</div>
<div style="left:287.50px;top:621px;font:400 14px/16px 'Liberation Sans',sans-serif;color:#000;white-space:nowrap;letter-spacing:-0.800px;">MS01015018</div>
<div style="left:436.00px;top:621px;font:400 14px/16px 'Liberation Sans',sans-serif;color:#000;white-space:nowrap;letter-spacing:-0.600px;">Lê Hương Quỳnh</div>
<div style="left:687.68px;top:621px;font:400 14px/16px 'Liberation Sans',sans-serif;color:#000;white-space:nowrap;letter-spacing:-0.600px;">28/03/2022</div>
<div style="left:806.04px;top:621px;font:400 14px/16px 'Liberation Sans',sans-serif;color:#000;white-space:nowrap;letter-spacing:-0.600px;">22</div>
<div style="left:954.50px;top:621px;font:400 14px/16px 'Liberation Sans',sans-serif;color:#000;white-space:nowrap;">+</div>
<div style="left:1053.50px;top:621px;font:400 14px/16px 'Liberation Sans',sans-serif;color:#000;white-space:nowrap;">+</div>
<div style="left:1086.50px;top:621px;font:400 14px/16px 'Liberation Sans',sans-serif;color:#000;white-space:nowrap;">+</div>
<div style="left:1119.50px;top:621px;font:400 14px/16px 'Liberation Sans',sans-serif;color:#000;white-space:nowrap;">+</div>
<div style="left:1152.50px;top:621px;font:400 14px/16px 'Liberation Sans',sans-serif;color:#000;white-space:nowrap;">+</div>
<div style="left:1185.50px;top:621px;font:400 14px/16px 'Liberation Sans',sans-serif;color:#000;white-space:nowrap;">+</div>
<div style="left:1284.50px;top:621px;font:400 14px/16px 'Liberation Sans',sans-serif;color:#000;white-space:nowrap;">+</div>
<div style="left:1317.50px;top:621px;font:400 14px/16px 'Liberation Sans',sans-serif;color:#000;white-space:nowrap;">+</div>
<div style="left:1350.50px;top:621px;font:400 14px/16px 'Liberation Sans',sans-serif;color:#000;white-space:nowrap;">+</div>
<div style="left:1383.50px;top:621px;font:400 14px/16px 'Liberation Sans',sans-serif;color:#000;white-space:nowrap;">+</div>
<div style="left:1416.50px;top:621px;font:400 14px/16px 'Liberation Sans',sans-serif;color:#000;white-space:nowrap;">+</div>
<div style="left:1515.50px;top:621px;font:400 14px/16px 'Liberation Sans',sans-serif;color:#000;white-space:nowrap;">+</div>
<div style="left:253.61px;top:638px;font:400 14px/16px 'Liberation Sans',sans-serif;color:#000;white-space:nowrap;letter-spacing:-0.600px;">5</div>
<div style="left:287.50px;top:638px;font:400 14px/16px 'Liberation Sans',sans-serif;color:#000;white-space:nowrap;letter-spacing:-0.800px;">MS01015008</div>
<div style="left:436.00px;top:638px;font:400 14px/16px 'Liberation Sans',sans-serif;color:#000;white-space:nowrap;letter-spacing:-0.600px;">Lương Thiện Đức</div>
<div style="left:687.68px;top:638px;font:400 14px/16px 'Liberation Sans',sans-serif;color:#000;white-space:nowrap;letter-spacing:-0.600px;">23/05/2022</div>
<div style="left:806.04px;top:638px;font:400 14px/16px 'Liberation Sans',sans-serif;color:#000;white-space:nowrap;letter-spacing:-0.600px;">21</div>
<div style="left:856.22px;top:638px;font:700 14px/16px 'Liberation Sans',sans-serif;color:#000;white-space:nowrap;">1</div>
<div style="left:898.22px;top:638px;font:400 14px/16px 'Liberation Sans',sans-serif;color:#000;white-space:nowrap;">1</div>
<div style="left:954.50px;top:638px;font:400 14px/16px 'Liberation Sans',sans-serif;color:#000;white-space:nowrap;">+</div>
<div style="left:1053.50px;top:638px;font:400 14px/16px 'Liberation Sans',sans-serif;color:#000;white-space:nowrap;">+</div>
<div style="left:1086.50px;top:638px;font:400 14px/16px 'Liberation Sans',sans-serif;color:#000;white-space:nowrap;">+</div>
<div style="left:1119.50px;top:638px;font:400 14px/16px 'Liberation Sans',sans-serif;color:#000;white-space:nowrap;">P</div>
<div style="left:1152.50px;top:638px;font:400 14px/16px 'Liberation Sans',sans-serif;color:#000;white-space:nowrap;">+</div>
<div style="left:1185.50px;top:638px;font:400 14px/16px 'Liberation Sans',sans-serif;color:#000;white-space:nowrap;">+</div>
<div style="left:1284.50px;top:638px;font:400 14px/16px 'Liberation Sans',sans-serif;color:#000;white-space:nowrap;">+</div>
<div style="left:1317.50px;top:638px;font:400 14px/16px 'Liberation Sans',sans-serif;color:#000;white-space:nowrap;">+</div>
<div style="left:1350.50px;top:638px;font:400 14px/16px 'Liberation Sans',sans-serif;color:#000;white-space:nowrap;">+</div>
<div style="left:1383.50px;top:638px;font:400 14px/16px 'Liberation Sans',sans-serif;color:#000;white-space:nowrap;">+</div>
<div style="left:1416.50px;top:638px;font:400 14px/16px 'Liberation Sans',sans-serif;color:#000;white-space:nowrap;">+</div>
<div style="left:1515.50px;top:638px;font:400 14px/16px 'Liberation Sans',sans-serif;color:#000;white-space:nowrap;">+</div>
<div style="left:253.61px;top:655px;font:400 14px/16px 'Liberation Sans',sans-serif;color:#000;white-space:nowrap;letter-spacing:-0.600px;">6</div>
<div style="left:287.50px;top:655px;font:400 14px/16px 'Liberation Sans',sans-serif;color:#000;white-space:nowrap;letter-spacing:-0.800px;">MS01015020</div>
<div style="left:436.00px;top:655px;font:400 14px/16px 'Liberation Sans',sans-serif;color:#000;white-space:nowrap;letter-spacing:-0.600px;">Mai Tiến Thành</div>
<div style="left:687.68px;top:655px;font:400 14px/16px 'Liberation Sans',sans-serif;color:#000;white-space:nowrap;letter-spacing:-0.600px;">09/05/2022</div>
<div style="left:806.04px;top:655px;font:400 14px/16px 'Liberation Sans',sans-serif;color:#000;white-space:nowrap;letter-spacing:-0.600px;">22</div>
<div style="left:954.50px;top:655px;font:400 14px/16px 'Liberation Sans',sans-serif;color:#000;white-space:nowrap;">+</div>
<div style="left:1053.50px;top:655px;font:400 14px/16px 'Liberation Sans',sans-serif;color:#000;white-space:nowrap;">+</div>
<div style="left:1086.50px;top:655px;font:400 14px/16px 'Liberation Sans',sans-serif;color:#000;white-space:nowrap;">+</div>
<div style="left:1119.50px;top:655px;font:400 14px/16px 'Liberation Sans',sans-serif;color:#000;white-space:nowrap;">+</div>
<div style="left:1152.50px;top:655px;font:400 14px/16px 'Liberation Sans',sans-serif;color:#000;white-space:nowrap;">+</div>
<div style="left:1185.50px;top:655px;font:400 14px/16px 'Liberation Sans',sans-serif;color:#000;white-space:nowrap;">+</div>
<div style="left:1284.50px;top:655px;font:400 14px/16px 'Liberation Sans',sans-serif;color:#000;white-space:nowrap;">+</div>
<div style="left:1317.50px;top:655px;font:400 14px/16px 'Liberation Sans',sans-serif;color:#000;white-space:nowrap;">+</div>
<div style="left:1350.50px;top:655px;font:400 14px/16px 'Liberation Sans',sans-serif;color:#000;white-space:nowrap;">+</div>
<div style="left:1383.50px;top:655px;font:400 14px/16px 'Liberation Sans',sans-serif;color:#000;white-space:nowrap;">+</div>
<div style="left:1416.50px;top:655px;font:400 14px/16px 'Liberation Sans',sans-serif;color:#000;white-space:nowrap;">+</div>
<div style="left:1515.50px;top:655px;font:400 14px/16px 'Liberation Sans',sans-serif;color:#000;white-space:nowrap;">+</div>
<div style="left:253.61px;top:672px;font:400 14px/16px 'Liberation Sans',sans-serif;color:#000;white-space:nowrap;letter-spacing:-0.600px;">7</div>
<div style="left:287.50px;top:672px;font:400 14px/16px 'Liberation Sans',sans-serif;color:#000;white-space:nowrap;letter-spacing:-0.800px;">MS01015021</div>
<div style="left:436.00px;top:672px;font:400 14px/16px 'Liberation Sans',sans-serif;color:#000;white-space:nowrap;letter-spacing:-0.600px;">Ngô Thị Thanh Thảo</div>
<div style="left:687.68px;top:672px;font:400 14px/16px 'Liberation Sans',sans-serif;color:#000;white-space:nowrap;letter-spacing:-0.600px;">27/01/2022</div>
<div style="left:806.04px;top:672px;font:400 14px/16px 'Liberation Sans',sans-serif;color:#000;white-space:nowrap;letter-spacing:-0.600px;">22</div>
<div style="left:954.50px;top:672px;font:400 14px/16px 'Liberation Sans',sans-serif;color:#000;white-space:nowrap;">+</div>
<div style="left:1053.50px;top:672px;font:400 14px/16px 'Liberation Sans',sans-serif;color:#000;white-space:nowrap;">+</div>
<div style="left:1086.50px;top:672px;font:400 14px/16px 'Liberation Sans',sans-serif;color:#000;white-space:nowrap;">+</div>
<div style="left:1119.50px;top:672px;font:400 14px/16px 'Liberation Sans',sans-serif;color:#000;white-space:nowrap;">+</div>
<div style="left:1152.50px;top:672px;font:400 14px/16px 'Liberation Sans',sans-serif;color:#000;white-space:nowrap;">+</div>
<div style="left:1185.50px;top:672px;font:400 14px/16px 'Liberation Sans',sans-serif;color:#000;white-space:nowrap;">+</div>
<div style="left:1284.50px;top:672px;font:400 14px/16px 'Liberation Sans',sans-serif;color:#000;white-space:nowrap;">+</div>
<div style="left:1317.50px;top:672px;font:400 14px/16px 'Liberation Sans',sans-serif;color:#000;white-space:nowrap;">+</div>
<div style="left:1350.50px;top:672px;font:400 14px/16px 'Liberation Sans',sans-serif;color:#000;white-space:nowrap;">+</div>
<div style="left:1383.50px;top:672px;font:400 14px/16px 'Liberation Sans',sans-serif;color:#000;white-space:nowrap;">+</div>
<div style="left:1416.50px;top:672px;font:400 14px/16px 'Liberation Sans',sans-serif;color:#000;white-space:nowrap;">+</div>
<div style="left:1515.50px;top:672px;font:400 14px/16px 'Liberation Sans',sans-serif;color:#000;white-space:nowrap;">+</div>
<div style="left:253.61px;top:689px;font:400 14px/16px 'Liberation Sans',sans-serif;color:#000;white-space:nowrap;letter-spacing:-0.600px;">8</div>
<div style="left:287.50px;top:689px;font:400 14px/16px 'Liberation Sans',sans-serif;color:#000;white-space:nowrap;letter-spacing:-0.800px;">MS01015006</div>
<div style="left:436.00px;top:689px;font:400 14px/16px 'Liberation Sans',sans-serif;color:#000;white-space:nowrap;letter-spacing:-0.600px;">Nguyễn Anh Đức</div>
<div style="left:687.68px;top:689px;font:400 14px/16px 'Liberation Sans',sans-serif;color:#000;white-space:nowrap;letter-spacing:-0.600px;">18/04/2022</div>
<div style="left:806.04px;top:689px;font:400 14px/16px 'Liberation Sans',sans-serif;color:#000;white-space:nowrap;letter-spacing:-0.600px;">21</div>
<div style="left:856.22px;top:689px;font:700 14px/16px 'Liberation Sans',sans-serif;color:#000;white-space:nowrap;">1</div>
<div style="left:898.22px;top:689px;font:400 14px/16px 'Liberation Sans',sans-serif;color:#000;white-space:nowrap;">1</div>
<div style="left:954.50px;top:689px;font:400 14px/16px 'Liberation Sans',sans-serif;color:#000;white-space:nowrap;">+</div>
<div style="left:1053.50px;top:689px;font:400 14px/16px 'Liberation Sans',sans-serif;color:#000;white-space:nowrap;">+</div>
<div style="left:1086.50px;top:689px;font:400 14px/16px 'Liberation Sans',sans-serif;color:#000;white-space:nowrap;">+</div>
<div style="left:1119.50px;top:689px;font:400 14px/16px 'Liberation Sans',sans-serif;color:#000;white-space:nowrap;">P</div>
<div style="left:1152.50px;top:689px;font:400 14px/16px 'Liberation Sans',sans-serif;color:#000;white-space:nowrap;">+</div>
<div style="left:1185.50px;top:689px;font:400 14px/16px 'Liberation Sans',sans-serif;color:#000;white-space:nowrap;">+</div>
<div style="left:1284.50px;top:689px;font:400 14px/16px 'Liberation Sans',sans-serif;color:#000;white-space:nowrap;">+</div>
<div style="left:1317.50px;top:689px;font:400 14px/16px 'Liberation Sans',sans-serif;color:#000;white-space:nowrap;">+</div>
<div style="left:1350.50px;top:689px;font:400 14px/16px 'Liberation Sans',sans-serif;color:#000;white-space:nowrap;">+</div>
<div style="left:1383.50px;top:689px;font:400 14px/16px 'Liberation Sans',sans-serif;color:#000;white-space:nowrap;">+</div>
<div style="left:1416.50px;top:689px;font:400 14px/16px 'Liberation Sans',sans-serif;color:#000;white-space:nowrap;">+</div>
<div style="left:1515.50px;top:689px;font:400 14px/16px 'Liberation Sans',sans-serif;color:#000;white-space:nowrap;">+</div>
<div style="left:253.61px;top:706px;font:400 14px/16px 'Liberation Sans',sans-serif;color:#000;white-space:nowrap;letter-spacing:-0.600px;">9</div>
<div style="left:287.50px;top:706px;font:400 14px/16px 'Liberation Sans',sans-serif;color:#000;white-space:nowrap;letter-spacing:-0.800px;">MS01015022</div>
<div style="left:436.00px;top:706px;font:400 14px/16px 'Liberation Sans',sans-serif;color:#000;white-space:nowrap;letter-spacing:-0.600px;">Nguyễn Đức Thịnh</div>
<div style="left:687.68px;top:706px;font:400 14px/16px 'Liberation Sans',sans-serif;color:#000;white-space:nowrap;letter-spacing:-0.600px;">27/01/2022</div>
<div style="left:806.04px;top:706px;font:400 14px/16px 'Liberation Sans',sans-serif;color:#000;white-space:nowrap;letter-spacing:-0.600px;">22</div>
<div style="left:954.50px;top:706px;font:400 14px/16px 'Liberation Sans',sans-serif;color:#000;white-space:nowrap;">+</div>
<div style="left:1053.50px;top:706px;font:400 14px/16px 'Liberation Sans',sans-serif;color:#000;white-space:nowrap;">+</div>
<div style="left:1086.50px;top:706px;font:400 14px/16px 'Liberation Sans',sans-serif;color:#000;white-space:nowrap;">+</div>
<div style="left:1119.50px;top:706px;font:400 14px/16px 'Liberation Sans',sans-serif;color:#000;white-space:nowrap;">+</div>
<div style="left:1152.50px;top:706px;font:400 14px/16px 'Liberation Sans',sans-serif;color:#000;white-space:nowrap;">+</div>
<div style="left:1185.50px;top:706px;font:400 14px/16px 'Liberation Sans',sans-serif;color:#000;white-space:nowrap;">+</div>
<div style="left:1284.50px;top:706px;font:400 14px/16px 'Liberation Sans',sans-serif;color:#000;white-space:nowrap;">+</div>
<div style="left:1317.50px;top:706px;font:400 14px/16px 'Liberation Sans',sans-serif;color:#000;white-space:nowrap;">+</div>
<div style="left:1350.50px;top:706px;font:400 14px/16px 'Liberation Sans',sans-serif;color:#000;white-space:nowrap;">+</div>
<div style="left:1383.50px;top:706px;font:400 14px/16px 'Liberation Sans',sans-serif;color:#000;white-space:nowrap;">+</div>
<div style="left:1416.50px;top:706px;font:400 14px/16px 'Liberation Sans',sans-serif;color:#000;white-space:nowrap;">+</div>
<div style="left:1515.50px;top:706px;font:400 14px/16px 'Liberation Sans',sans-serif;color:#000;white-space:nowrap;">+</div>
<div style="left:250.02px;top:723px;font:400 14px/16px 'Liberation Sans',sans-serif;color:#000;white-space:nowrap;letter-spacing:-0.600px;">10</div>
<div style="left:287.50px;top:723px;font:400 14px/16px 'Liberation Sans',sans-serif;color:#000;white-space:nowrap;letter-spacing:-0.800px;">MS01015007</div>
<div style="left:436.00px;top:723px;font:400 14px/16px 'Liberation Sans',sans-serif;color:#000;white-space:nowrap;letter-spacing:-0.600px;">Nguyễn Minh Đức</div>
<div style="left:687.68px;top:723px;font:400 14px/16px 'Liberation Sans',sans-serif;color:#000;white-space:nowrap;letter-spacing:-0.600px;">24/01/2022</div>
<div style="left:806.04px;top:723px;font:400 14px/16px 'Liberation Sans',sans-serif;color:#000;white-space:nowrap;letter-spacing:-0.600px;">21</div>
<div style="left:856.22px;top:723px;font:700 14px/16px 'Liberation Sans',sans-serif;color:#000;white-space:nowrap;">1</div>
<div style="left:941.22px;top:723px;font:400 14px/16px 'Liberation Sans',sans-serif;color:#000;white-space:nowrap;">1</div>
<div style="left:954.50px;top:723px;font:400 14px/16px 'Liberation Sans',sans-serif;color:#000;white-space:nowrap;">+</div>
<div style="left:1053.50px;top:723px;font:400 14px/16px 'Liberation Sans',sans-serif;color:#000;white-space:nowrap;">+</div>
<div style="left:1086.50px;top:723px;font:400 14px/16px 'Liberation Sans',sans-serif;color:#000;white-space:nowrap;">+</div>
<div style="left:1119.50px;top:723px;font:400 14px/16px 'Liberation Sans',sans-serif;color:#000;white-space:nowrap;">K</div>
<div style="left:1152.50px;top:723px;font:400 14px/16px 'Liberation Sans',sans-serif;color:#000;white-space:nowrap;">+</div>
<div style="left:1185.50px;top:723px;font:400 14px/16px 'Liberation Sans',sans-serif;color:#000;white-space:nowrap;">+</div>
<div style="left:1284.50px;top:723px;font:400 14px/16px 'Liberation Sans',sans-serif;color:#000;white-space:nowrap;">+</div>
<div style="left:1317.50px;top:723px;font:400 14px/16px 'Liberation Sans',sans-serif;color:#000;white-space:nowrap;">+</div>
<div style="left:1350.50px;top:723px;font:400 14px/16px 'Liberation Sans',sans-serif;color:#000;white-space:nowrap;">+</div>
<div style="left:1383.50px;top:723px;font:400 14px/16px 'Liberation Sans',sans-serif;color:#000;white-space:nowrap;">+</div>
<div style="left:1416.50px;top:723px;font:400 14px/16px 'Liberation Sans',sans-serif;color:#000;white-space:nowrap;">+</div>
<div style="left:1515.50px;top:723px;font:400 14px/16px 'Liberation Sans',sans-serif;color:#000;white-space:nowrap;">+</div>
<div style="left:250.53px;top:740px;font:400 14px/16px 'Liberation Sans',sans-serif;color:#000;white-space:nowrap;letter-spacing:-0.600px;">11</div>
<div style="left:287.50px;top:740px;font:400 14px/16px 'Liberation Sans',sans-serif;color:#000;white-space:nowrap;letter-spacing:-0.800px;">MS01015009</div>
<div style="left:436.00px;top:740px;font:400 14px/16px 'Liberation Sans',sans-serif;color:#000;white-space:nowrap;letter-spacing:-0.600px;">Nguyễn Minh Hiếu</div>
<div style="left:687.68px;top:740px;font:400 14px/16px 'Liberation Sans',sans-serif;color:#000;white-space:nowrap;letter-spacing:-0.600px;">14/02/2022</div>
<div style="left:806.04px;top:740px;font:400 14px/16px 'Liberation Sans',sans-serif;color:#000;white-space:nowrap;letter-spacing:-0.600px;">22</div>
<div style="left:954.50px;top:740px;font:400 14px/16px 'Liberation Sans',sans-serif;color:#000;white-space:nowrap;">+</div>
<div style="left:1053.50px;top:740px;font:400 14px/16px 'Liberation Sans',sans-serif;color:#000;white-space:nowrap;">+</div>
<div style="left:1086.50px;top:740px;font:400 14px/16px 'Liberation Sans',sans-serif;color:#000;white-space:nowrap;">+</div>
<div style="left:1119.50px;top:740px;font:400 14px/16px 'Liberation Sans',sans-serif;color:#000;white-space:nowrap;">+</div>
<div style="left:1152.50px;top:740px;font:400 14px/16px 'Liberation Sans',sans-serif;color:#000;white-space:nowrap;">+</div>
<div style="left:1185.50px;top:740px;font:400 14px/16px 'Liberation Sans',sans-serif;color:#000;white-space:nowrap;">+</div>
<div style="left:1284.50px;top:740px;font:400 14px/16px 'Liberation Sans',sans-serif;color:#000;white-space:nowrap;">+</div>
<div style="left:1317.50px;top:740px;font:400 14px/16px 'Liberation Sans',sans-serif;color:#000;white-space:nowrap;">+</div>
<div style="left:1350.50px;top:740px;font:400 14px/16px 'Liberation Sans',sans-serif;color:#000;white-space:nowrap;">+</div>
<div style="left:1383.50px;top:740px;font:400 14px/16px 'Liberation Sans',sans-serif;color:#000;white-space:nowrap;">+</div>
<div style="left:1416.50px;top:740px;font:400 14px/16px 'Liberation Sans',sans-serif;color:#000;white-space:nowrap;">+</div>
<div style="left:1515.50px;top:740px;font:400 14px/16px 'Liberation Sans',sans-serif;color:#000;white-space:nowrap;">+</div>
<div style="left:250.02px;top:757px;font:400 14px/16px 'Liberation Sans',sans-serif;color:#000;white-space:nowrap;letter-spacing:-0.600px;">12</div>
<div style="left:287.50px;top:757px;font:400 14px/16px 'Liberation Sans',sans-serif;color:#000;white-space:nowrap;letter-spacing:-0.800px;">MS01015017</div>
<div style="left:436.00px;top:757px;font:400 14px/16px 'Liberation Sans',sans-serif;color:#000;white-space:nowrap;letter-spacing:-0.600px;">Nguyễn Thu Phương</div>
<div style="left:687.68px;top:757px;font:400 14px/16px 'Liberation Sans',sans-serif;color:#000;white-space:nowrap;letter-spacing:-0.600px;">20/09/2021</div>
<div style="left:806.04px;top:757px;font:400 14px/16px 'Liberation Sans',sans-serif;color:#000;white-space:nowrap;letter-spacing:-0.600px;">22</div>
<div style="left:954.50px;top:757px;font:400 14px/16px 'Liberation Sans',sans-serif;color:#000;white-space:nowrap;">+</div>
<div style="left:1053.50px;top:757px;font:400 14px/16px 'Liberation Sans',sans-serif;color:#000;white-space:nowrap;">+</div>
<div style="left:1086.50px;top:757px;font:400 14px/16px 'Liberation Sans',sans-serif;color:#000;white-space:nowrap;">+</div>
<div style="left:1119.50px;top:757px;font:400 14px/16px 'Liberation Sans',sans-serif;color:#000;white-space:nowrap;">+</div>
<div style="left:1152.50px;top:757px;font:400 14px/16px 'Liberation Sans',sans-serif;color:#000;white-space:nowrap;">+</div>
<div style="left:1185.50px;top:757px;font:400 14px/16px 'Liberation Sans',sans-serif;color:#000;white-space:nowrap;">+</div>
<div style="left:1284.50px;top:757px;font:400 14px/16px 'Liberation Sans',sans-serif;color:#000;white-space:nowrap;">+</div>
<div style="left:1317.50px;top:757px;font:400 14px/16px 'Liberation Sans',sans-serif;color:#000;white-space:nowrap;">+</div>
<div style="left:1350.50px;top:757px;font:400 14px/16px 'Liberation Sans',sans-serif;color:#000;white-space:nowrap;">+</div>
<div style="left:1383.50px;top:757px;font:400 14px/16px 'Liberation Sans',sans-serif;color:#000;white-space:nowrap;">+</div>
<div style="left:1416.50px;top:757px;font:400 14px/16px 'Liberation Sans',sans-serif;color:#000;white-space:nowrap;">+</div>
<div style="left:1515.50px;top:757px;font:400 14px/16px 'Liberation Sans',sans-serif;color:#000;white-space:nowrap;">+</div>
<div style="left:250.02px;top:774px;font:400 14px/16px 'Liberation Sans',sans-serif;color:#000;white-space:nowrap;letter-spacing:-0.600px;">13</div>
<div style="left:287.50px;top:774px;font:400 14px/16px 'Liberation Sans',sans-serif;color:#000;white-space:nowrap;letter-spacing:-0.800px;">MS01015013</div>
<div style="left:436.00px;top:774px;font:400 14px/16px 'Liberation Sans',sans-serif;color:#000;white-space:nowrap;letter-spacing:-0.600px;">Phạm Tuấn Nghĩa</div>
<div style="left:687.68px;top:774px;font:400 14px/16px 'Liberation Sans',sans-serif;color:#000;white-space:nowrap;letter-spacing:-0.600px;">17/01/2022</div>
<div style="left:806.04px;top:774px;font:400 14px/16px 'Liberation Sans',sans-serif;color:#000;white-space:nowrap;letter-spacing:-0.600px;">22</div>
<div style="left:954.50px;top:774px;font:400 14px/16px 'Liberation Sans',sans-serif;color:#000;white-space:nowrap;">+</div>
<div style="left:1053.50px;top:774px;font:400 14px/16px 'Liberation Sans',sans-serif;color:#000;white-space:nowrap;">+</div>
<div style="left:1086.50px;top:774px;font:400 14px/16px 'Liberation Sans',sans-serif;color:#000;white-space:nowrap;">+</div>
<div style="left:1119.50px;top:774px;font:400 14px/16px 'Liberation Sans',sans-serif;color:#000;white-space:nowrap;">+</div>
<div style="left:1152.50px;top:774px;font:400 14px/16px 'Liberation Sans',sans-serif;color:#000;white-space:nowrap;">+</div>
<div style="left:1185.50px;top:774px;font:400 14px/16px 'Liberation Sans',sans-serif;color:#000;white-space:nowrap;">+</div>
<div style="left:1284.50px;top:774px;font:400 14px/16px 'Liberation Sans',sans-serif;color:#000;white-space:nowrap;">+</div>
<div style="left:1317.50px;top:774px;font:400 14px/16px 'Liberation Sans',sans-serif;color:#000;white-space:nowrap;">+</div>
<div style="left:1350.50px;top:774px;font:400 14px/16px 'Liberation Sans',sans-serif;color:#000;white-space:nowrap;">+</div>
<div style="left:1383.50px;top:774px;font:400 14px/16px 'Liberation Sans',sans-serif;color:#000;white-space:nowrap;">+</div>
<div style="left:1416.50px;top:774px;font:400 14px/16px 'Liberation Sans',sans-serif;color:#000;white-space:nowrap;">+</div>
<div style="left:1515.50px;top:774px;font:400 14px/16px 'Liberation Sans',sans-serif;color:#000;white-space:nowrap;">+</div>
<div style="left:250.02px;top:791px;font:400 14px/16px 'Liberation Sans',sans-serif;color:#000;white-space:nowrap;letter-spacing:-0.600px;">14</div>
<div style="left:287.50px;top:791px;font:400 14px/16px 'Liberation Sans',sans-serif;color:#000;white-space:nowrap;letter-spacing:-0.800px;">MS01015002</div>
<div style="left:436.00px;top:791px;font:400 14px/16px 'Liberation Sans',sans-serif;color:#000;white-space:nowrap;letter-spacing:-0.600px;">Phạm Thị Ngọc Anh</div>
<div style="left:687.68px;top:791px;font:400 14px/16px 'Liberation Sans',sans-serif;color:#000;white-space:nowrap;letter-spacing:-0.600px;">25/05/2022</div>
<div style="left:806.04px;top:791px;font:400 14px/16px 'Liberation Sans',sans-serif;color:#000;white-space:nowrap;letter-spacing:-0.600px;">22</div>
<div style="left:954.50px;top:791px;font:400 14px/16px 'Liberation Sans',sans-serif;color:#000;white-space:nowrap;">+</div>
<div style="left:1053.50px;top:791px;font:400 14px/16px 'Liberation Sans',sans-serif;color:#000;white-space:nowrap;">+</div>
<div style="left:1086.50px;top:791px;font:400 14px/16px 'Liberation Sans',sans-serif;color:#000;white-space:nowrap;">+</div>
<div style="left:1119.50px;top:791px;font:400 14px/16px 'Liberation Sans',sans-serif;color:#000;white-space:nowrap;">+</div>
<div style="left:1152.50px;top:791px;font:400 14px/16px 'Liberation Sans',sans-serif;color:#000;white-space:nowrap;">+</div>
<div style="left:1185.50px;top:791px;font:400 14px/16px 'Liberation Sans',sans-serif;color:#000;white-space:nowrap;">+</div>
<div style="left:1284.50px;top:791px;font:400 14px/16px 'Liberation Sans',sans-serif;color:#000;white-space:nowrap;">+</div>
<div style="left:1317.50px;top:791px;font:400 14px/16px 'Liberation Sans',sans-serif;color:#000;white-space:nowrap;">+</div>
<div style="left:1350.50px;top:791px;font:400 14px/16px 'Liberation Sans',sans-serif;color:#000;white-space:nowrap;">+</div>
<div style="left:1383.50px;top:791px;font:400 14px/16px 'Liberation Sans',sans-serif;color:#000;white-space:nowrap;">+</div>
<div style="left:1416.50px;top:791px;font:400 14px/16px 'Liberation Sans',sans-serif;color:#000;white-space:nowrap;">+</div>
<div style="left:1515.50px;top:791px;font:400 14px/16px 'Liberation Sans',sans-serif;color:#000;white-space:nowrap;">+</div>
<div style="left:250.02px;top:808px;font:400 14px/16px 'Liberation Sans',sans-serif;color:#000;white-space:nowrap;letter-spacing:-0.600px;">15</div>
<div style="left:287.50px;top:808px;font:400 14px/16px 'Liberation Sans',sans-serif;color:#000;white-space:nowrap;letter-spacing:-0.800px;">MS01015023</div>
<div style="left:436.00px;top:808px;font:400 14px/16px 'Liberation Sans',sans-serif;color:#000;white-space:nowrap;letter-spacing:-0.600px;">Phan Ngọc Toàn</div>
<div style="left:687.68px;top:808px;font:400 14px/16px 'Liberation Sans',sans-serif;color:#000;white-space:nowrap;letter-spacing:-0.600px;">15/06/2022</div>
<div style="left:806.04px;top:808px;font:400 14px/16px 'Liberation Sans',sans-serif;color:#000;white-space:nowrap;letter-spacing:-0.600px;">22</div>
<div style="left:954.50px;top:808px;font:400 14px/16px 'Liberation Sans',sans-serif;color:#000;white-space:nowrap;">+</div>
<div style="left:1053.50px;top:808px;font:400 14px/16px 'Liberation Sans',sans-serif;color:#000;white-space:nowrap;">+</div>
<div style="left:1086.50px;top:808px;font:400 14px/16px 'Liberation Sans',sans-serif;color:#000;white-space:nowrap;">+</div>
<div style="left:1119.50px;top:808px;font:400 14px/16px 'Liberation Sans',sans-serif;color:#000;white-space:nowrap;">+</div>
<div style="left:1152.50px;top:808px;font:400 14px/16px 'Liberation Sans',sans-serif;color:#000;white-space:nowrap;">+</div>
<div style="left:1185.50px;top:808px;font:400 14px/16px 'Liberation Sans',sans-serif;color:#000;white-space:nowrap;">+</div>
<div style="left:1284.50px;top:808px;font:400 14px/16px 'Liberation Sans',sans-serif;color:#000;white-space:nowrap;">+</div>
<div style="left:1317.50px;top:808px;font:400 14px/16px 'Liberation Sans',sans-serif;color:#000;white-space:nowrap;">+</div>
<div style="left:1350.50px;top:808px;font:400 14px/16px 'Liberation Sans',sans-serif;color:#000;white-space:nowrap;">+</div>
<div style="left:1383.50px;top:808px;font:400 14px/16px 'Liberation Sans',sans-serif;color:#000;white-space:nowrap;">+</div>
<div style="left:1416.50px;top:808px;font:400 14px/16px 'Liberation Sans',sans-serif;color:#000;white-space:nowrap;">+</div>
<div style="left:1515.50px;top:808px;font:400 14px/16px 'Liberation Sans',sans-serif;color:#000;white-space:nowrap;">+</div>
<div style="left:250.02px;top:825px;font:400 14px/16px 'Liberation Sans',sans-serif;color:#000;white-space:nowrap;letter-spacing:-0.600px;">16</div>
<div style="left:287.50px;top:825px;font:400 14px/16px 'Liberation Sans',sans-serif;color:#000;white-space:nowrap;letter-spacing:-0.800px;">MS01015015</div>
<div style="left:436.00px;top:825px;font:400 14px/16px 'Liberation Sans',sans-serif;color:#000;white-space:nowrap;letter-spacing:-0.600px;">Trần Đức Văn Nhân</div>
<div style="left:687.68px;top:825px;font:400 14px/16px 'Liberation Sans',sans-serif;color:#000;white-space:nowrap;letter-spacing:-0.600px;">03/01/2022</div>
<div style="left:806.04px;top:825px;font:400 14px/16px 'Liberation Sans',sans-serif;color:#000;white-space:nowrap;letter-spacing:-0.600px;">22</div>
<div style="left:954.50px;top:825px;font:400 14px/16px 'Liberation Sans',sans-serif;color:#000;white-space:nowrap;">+</div>
<div style="left:1053.50px;top:825px;font:400 14px/16px 'Liberation Sans',sans-serif;color:#000;white-space:nowrap;">+</div>
<div style="left:1086.50px;top:825px;font:400 14px/16px 'Liberation Sans',sans-serif;color:#000;white-space:nowrap;">+</div>
<div style="left:1119.50px;top:825px;font:400 14px/16px 'Liberation Sans',sans-serif;color:#000;white-space:nowrap;">+</div>
<div style="left:1152.50px;top:825px;font:400 14px/16px 'Liberation Sans',sans-serif;color:#000;white-space:nowrap;">+</div>
<div style="left:1185.50px;top:825px;font:400 14px/16px 'Liberation Sans',sans-serif;color:#000;white-space:nowrap;">+</div>
<div style="left:1284.50px;top:825px;font:400 14px/16px 'Liberation Sans',sans-serif;color:#000;white-space:nowrap;">+</div>
<div style="left:1317.50px;top:825px;font:400 14px/16px 'Liberation Sans',sans-serif;color:#000;white-space:nowrap;">+</div>
<div style="left:1350.50px;top:825px;font:400 14px/16px 'Liberation Sans',sans-serif;color:#000;white-space:nowrap;">+</div>
<div style="left:1383.50px;top:825px;font:400 14px/16px 'Liberation Sans',sans-serif;color:#000;white-space:nowrap;">+</div>
<div style="left:1416.50px;top:825px;font:400 14px/16px 'Liberation Sans',sans-serif;color:#000;white-space:nowrap;">+</div>
<div style="left:1515.50px;top:825px;font:400 14px/16px 'Liberation Sans',sans-serif;color:#000;white-space:nowrap;">+</div>
<div style="left:250.02px;top:842px;font:400 14px/16px 'Liberation Sans',sans-serif;color:#000;white-space:nowrap;letter-spacing:-0.600px;">17</div>
<div style="left:287.50px;top:842px;font:400 14px/16px 'Liberation Sans',sans-serif;color:#000;white-space:nowrap;letter-spacing:-0.800px;">MS01015011</div>
<div style="left:436.00px;top:842px;font:400 14px/16px 'Liberation Sans',sans-serif;color:#000;white-space:nowrap;letter-spacing:-0.600px;">Trần Lê Minh</div>
<div style="left:687.68px;top:842px;font:400 14px/16px 'Liberation Sans',sans-serif;color:#000;white-space:nowrap;letter-spacing:-0.600px;">02/05/2022</div>
<div style="left:806.04px;top:842px;font:400 14px/16px 'Liberation Sans',sans-serif;color:#000;white-space:nowrap;letter-spacing:-0.600px;">22</div>
<div style="left:954.50px;top:842px;font:400 14px/16px 'Liberation Sans',sans-serif;color:#000;white-space:nowrap;">+</div>
<div style="left:1053.50px;top:842px;font:400 14px/16px 'Liberation Sans',sans-serif;color:#000;white-space:nowrap;">+</div>
<div style="left:1086.50px;top:842px;font:400 14px/16px 'Liberation Sans',sans-serif;color:#000;white-space:nowrap;">+</div>
<div style="left:1119.50px;top:842px;font:400 14px/16px 'Liberation Sans',sans-serif;color:#000;white-space:nowrap;">+</div>
<div style="left:1152.50px;top:842px;font:400 14px/16px 'Liberation Sans',sans-serif;color:#000;white-space:nowrap;">+</div>
<div style="left:1185.50px;top:842px;font:400 14px/16px 'Liberation Sans',sans-serif;color:#000;white-space:nowrap;">+</div>
<div style="left:1284.50px;top:842px;font:400 14px/16px 'Liberation Sans',sans-serif;color:#000;white-space:nowrap;">+</div>
<div style="left:1317.50px;top:842px;font:400 14px/16px 'Liberation Sans',sans-serif;color:#000;white-space:nowrap;">+</div>
<div style="left:1350.50px;top:842px;font:400 14px/16px 'Liberation Sans',sans-serif;color:#000;white-space:nowrap;">+</div>
<div style="left:1383.50px;top:842px;font:400 14px/16px 'Liberation Sans',sans-serif;color:#000;white-space:nowrap;">+</div>
<div style="left:1416.50px;top:842px;font:400 14px/16px 'Liberation Sans',sans-serif;color:#000;white-space:nowrap;">+</div>
<div style="left:1515.50px;top:842px;font:400 14px/16px 'Liberation Sans',sans-serif;color:#000;white-space:nowrap;">+</div>
<div style="left:250.02px;top:859px;font:400 14px/16px 'Liberation Sans',sans-serif;color:#000;white-space:nowrap;letter-spacing:-0.600px;">18</div>
<div style="left:287.50px;top:859px;font:400 14px/16px 'Liberation Sans',sans-serif;color:#000;white-space:nowrap;letter-spacing:-0.800px;">MS01015004</div>
<div style="left:436.00px;top:859px;font:400 14px/16px 'Liberation Sans',sans-serif;color:#000;white-space:nowrap;letter-spacing:-0.600px;">Trần Quang Anh</div>
<div style="left:687.68px;top:859px;font:400 14px/16px 'Liberation Sans',sans-serif;color:#000;white-space:nowrap;letter-spacing:-0.600px;">14/02/2022</div>
<div style="left:806.04px;top:859px;font:400 14px/16px 'Liberation Sans',sans-serif;color:#000;white-space:nowrap;letter-spacing:-0.600px;">22</div>
<div style="left:954.50px;top:859px;font:400 14px/16px 'Liberation Sans',sans-serif;color:#000;white-space:nowrap;">+</div>
<div style="left:1053.50px;top:859px;font:400 14px/16px 'Liberation Sans',sans-serif;color:#000;white-space:nowrap;">+</div>
<div style="left:1086.50px;top:859px;font:400 14px/16px 'Liberation Sans',sans-serif;color:#000;white-space:nowrap;">+</div>
<div style="left:1119.50px;top:859px;font:400 14px/16px 'Liberation Sans',sans-serif;color:#000;white-space:nowrap;">+</div>
<div style="left:1152.50px;top:859px;font:400 14px/16px 'Liberation Sans',sans-serif;color:#000;white-space:nowrap;">+</div>
<div style="left:1185.50px;top:859px;font:400 14px/16px 'Liberation Sans',sans-serif;color:#000;white-space:nowrap;">+</div>
<div style="left:1284.50px;top:859px;font:400 14px/16px 'Liberation Sans',sans-serif;color:#000;white-space:nowrap;">+</div>
<div style="left:1317.50px;top:859px;font:400 14px/16px 'Liberation Sans',sans-serif;color:#000;white-space:nowrap;">+</div>
<div style="left:1350.50px;top:859px;font:400 14px/16px 'Liberation Sans',sans-serif;color:#000;white-space:nowrap;">+</div>
<div style="left:1383.50px;top:859px;font:400 14px/16px 'Liberation Sans',sans-serif;color:#000;white-space:nowrap;">+</div>
<div style="left:1416.50px;top:859px;font:400 14px/16px 'Liberation Sans',sans-serif;color:#000;white-space:nowrap;">+</div>
<div style="left:1515.50px;top:859px;font:400 14px/16px 'Liberation Sans',sans-serif;color:#000;white-space:nowrap;">+</div>
<div style="left:250.02px;top:876px;font:400 14px/16px 'Liberation Sans',sans-serif;color:#000;white-space:nowrap;letter-spacing:-0.600px;">19</div>
<div style="left:287.50px;top:876px;font:400 14px/16px 'Liberation Sans',sans-serif;color:#000;white-space:nowrap;letter-spacing:-0.800px;">MS01015010</div>
<div style="left:436.00px;top:876px;font:400 14px/16px 'Liberation Sans',sans-serif;color:#000;white-space:nowrap;letter-spacing:-0.600px;">Trần Quốc Hưng</div>
<div style="left:687.68px;top:876px;font:400 14px/16px 'Liberation Sans',sans-serif;color:#000;white-space:nowrap;letter-spacing:-0.600px;">31/01/2022</div>
<div style="left:806.04px;top:876px;font:400 14px/16px 'Liberation Sans',sans-serif;color:#000;white-space:nowrap;letter-spacing:-0.600px;">22</div>
<div style="left:954.50px;top:876px;font:400 14px/16px 'Liberation Sans',sans-serif;color:#000;white-space:nowrap;">+</div>
<div style="left:1053.50px;top:876px;font:400 14px/16px 'Liberation Sans',sans-serif;color:#000;white-space:nowrap;">+</div>
<div style="left:1086.50px;top:876px;font:400 14px/16px 'Liberation Sans',sans-serif;color:#000;white-space:nowrap;">+</div>
<div style="left:1119.50px;top:876px;font:400 14px/16px 'Liberation Sans',sans-serif;color:#000;white-space:nowrap;">+</div>
<div style="left:1152.50px;top:876px;font:400 14px/16px 'Liberation Sans',sans-serif;color:#000;white-space:nowrap;">+</div>
<div style="left:1185.50px;top:876px;font:400 14px/16px 'Liberation Sans',sans-serif;color:#000;white-space:nowrap;">+</div>
<div style="left:1284.50px;top:876px;font:400 14px/16px 'Liberation Sans',sans-serif;color:#000;white-space:nowrap;">+</div>
<div style="left:1317.50px;top:876px;font:400 14px/16px 'Liberation Sans',sans-serif;color:#000;white-space:nowrap;">+</div>
<div style="left:1350.50px;top:876px;font:400 14px/16px 'Liberation Sans',sans-serif;color:#000;white-space:nowrap;">+</div>
<div style="left:1383.50px;top:876px;font:400 14px/16px 'Liberation Sans',sans-serif;color:#000;white-space:nowrap;">+</div>
<div style="left:1416.50px;top:876px;font:400 14px/16px 'Liberation Sans',sans-serif;color:#000;white-space:nowrap;">+</div>
<div style="left:1515.50px;top:876px;font:400 14px/16px 'Liberation Sans',sans-serif;color:#000;white-space:nowrap;">+</div>
<div style="left:250.02px;top:893px;font:400 14px/16px 'Liberation Sans',sans-serif;color:#000;white-space:nowrap;letter-spacing:-0.600px;">20</div>
<div style="left:287.50px;top:893px;font:400 14px/16px 'Liberation Sans',sans-serif;color:#000;white-space:nowrap;letter-spacing:-0.800px;">MS01015016</div>
<div style="left:436.00px;top:893px;font:400 14px/16px 'Liberation Sans',sans-serif;color:#000;white-space:nowrap;letter-spacing:-0.600px;">Vũ Hồng Nhung</div>
<div style="left:687.68px;top:893px;font:400 14px/16px 'Liberation Sans',sans-serif;color:#000;white-space:nowrap;letter-spacing:-0.600px;">30/08/2021</div>
<div style="left:806.04px;top:893px;font:400 14px/16px 'Liberation Sans',sans-serif;color:#000;white-space:nowrap;letter-spacing:-0.600px;">22</div>
<div style="left:954.50px;top:893px;font:400 14px/16px 'Liberation Sans',sans-serif;color:#000;white-space:nowrap;">+</div>
<div style="left:1053.50px;top:893px;font:400 14px/16px 'Liberation Sans',sans-serif;color:#000;white-space:nowrap;">+</div>
<div style="left:1086.50px;top:893px;font:400 14px/16px 'Liberation Sans',sans-serif;color:#000;white-space:nowrap;">+</div>
<div style="left:1119.50px;top:893px;font:400 14px/16px 'Liberation Sans',sans-serif;color:#000;white-space:nowrap;">+</div>
<div style="left:1152.50px;top:893px;font:400 14px/16px 'Liberation Sans',sans-serif;color:#000;white-space:nowrap;">+</div>
<div style="left:1185.50px;top:893px;font:400 14px/16px 'Liberation Sans',sans-serif;color:#000;white-space:nowrap;">+</div>
<div style="left:1284.50px;top:893px;font:400 14px/16px 'Liberation Sans',sans-serif;color:#000;white-space:nowrap;">+</div>
<div style="left:1317.50px;top:893px;font:400 14px/16px 'Liberation Sans',sans-serif;color:#000;white-space:nowrap;">+</div>
<div style="left:1350.50px;top:893px;font:400 14px/16px 'Liberation Sans',sans-serif;color:#000;white-space:nowrap;">+</div>
<div style="left:1383.50px;top:893px;font:400 14px/16px 'Liberation Sans',sans-serif;color:#000;white-space:nowrap;">+</div>
<div style="left:1416.50px;top:893px;font:400 14px/16px 'Liberation Sans',sans-serif;color:#000;white-space:nowrap;">+</div>
<div style="left:1515.50px;top:893px;font:400 14px/16px 'Liberation Sans',sans-serif;color:#000;white-space:nowrap;">+</div>
<div style="left:250.02px;top:910px;font:400 14px/16px 'Liberation Sans',sans-serif;color:#000;white-space:nowrap;letter-spacing:-0.600px;">21</div>
<div style="left:287.50px;top:910px;font:400 14px/16px 'Liberation Sans',sans-serif;color:#000;white-space:nowrap;letter-spacing:-0.800px;">MS01015003</div>
<div style="left:436.00px;top:910px;font:400 14px/16px 'Liberation Sans',sans-serif;color:#000;white-space:nowrap;letter-spacing:-0.600px;">Vũ Phương Anh</div>
<div style="left:687.68px;top:910px;font:400 14px/16px 'Liberation Sans',sans-serif;color:#000;white-space:nowrap;letter-spacing:-0.600px;">15/02/2022</div>
<div style="left:806.04px;top:910px;font:400 14px/16px 'Liberation Sans',sans-serif;color:#000;white-space:nowrap;letter-spacing:-0.600px;">22</div>
<div style="left:954.50px;top:910px;font:400 14px/16px 'Liberation Sans',sans-serif;color:#000;white-space:nowrap;">+</div>
<div style="left:1053.50px;top:910px;font:400 14px/16px 'Liberation Sans',sans-serif;color:#000;white-space:nowrap;">+</div>
<div style="left:1086.50px;top:910px;font:400 14px/16px 'Liberation Sans',sans-serif;color:#000;white-space:nowrap;">+</div>
<div style="left:1119.50px;top:910px;font:400 14px/16px 'Liberation Sans',sans-serif;color:#000;white-space:nowrap;">+</div>
<div style="left:1152.50px;top:910px;font:400 14px/16px 'Liberation Sans',sans-serif;color:#000;white-space:nowrap;">+</div>
<div style="left:1185.50px;top:910px;font:400 14px/16px 'Liberation Sans',sans-serif;color:#000;white-space:nowrap;">+</div>
<div style="left:1284.50px;top:910px;font:400 14px/16px 'Liberation Sans',sans-serif;color:#000;white-space:nowrap;">+</div>
<div style="left:1317.50px;top:910px;font:400 14px/16px 'Liberation Sans',sans-serif;color:#000;white-space:nowrap;">+</div>
<div style="left:1350.50px;top:910px;font:400 14px/16px 'Liberation Sans',sans-serif;color:#000;white-space:nowrap;">+</div>
<div style="left:1383.50px;top:910px;font:400 14px/16px 'Liberation Sans',sans-serif;color:#000;white-space:nowrap;">+</div>
<div style="left:1416.50px;top:910px;font:400 14px/16px 'Liberation Sans',sans-serif;color:#000;white-space:nowrap;">+</div>
<div style="left:1515.50px;top:910px;font:400 14px/16px 'Liberation Sans',sans-serif;color:#000;white-space:nowrap;">+</div>
<div style="left:250.02px;top:927px;font:400 14px/16px 'Liberation Sans',sans-serif;color:#000;white-space:nowrap;letter-spacing:-0.600px;">22</div>
<div style="left:287.50px;top:927px;font:400 14px/16px 'Liberation Sans',sans-serif;color:#000;white-space:nowrap;letter-spacing:-0.800px;">MS01015005</div>
<div style="left:436.00px;top:927px;font:400 14px/16px 'Liberation Sans',sans-serif;color:#000;white-space:nowrap;letter-spacing:-0.600px;">Vũ Thị Vân Anh</div>
<div style="left:687.68px;top:927px;font:400 14px/16px 'Liberation Sans',sans-serif;color:#000;white-space:nowrap;letter-spacing:-0.600px;">21/03/2022</div>
<div style="left:806.04px;top:927px;font:400 14px/16px 'Liberation Sans',sans-serif;color:#000;white-space:nowrap;letter-spacing:-0.600px;">22</div>
<div style="left:954.50px;top:927px;font:400 14px/16px 'Liberation Sans',sans-serif;color:#000;white-space:nowrap;">+</div>
<div style="left:1053.50px;top:927px;font:400 14px/16px 'Liberation Sans',sans-serif;color:#000;white-space:nowrap;">+</div>
<div style="left:1086.50px;top:927px;font:400 14px/16px 'Liberation Sans',sans-serif;color:#000;white-space:nowrap;">+</div>
<div style="left:1119.50px;top:927px;font:400 14px/16px 'Liberation Sans',sans-serif;color:#000;white-space:nowrap;">+</div>
<div style="left:1152.50px;top:927px;font:400 14px/16px 'Liberation Sans',sans-serif;color:#000;white-space:nowrap;">+</div>
<div style="left:1185.50px;top:927px;font:400 14px/16px 'Liberation Sans',sans-serif;color:#000;white-space:nowrap;">+</div>
<div style="left:1284.50px;top:927px;font:400 14px/16px 'Liberation Sans',sans-serif;color:#000;white-space:nowrap;">+</div>
<div style="left:1317.50px;top:927px;font:400 14px/16px 'Liberation Sans',sans-serif;color:#000;white-space:nowrap;">+</div>
<div style="left:1350.50px;top:927px;font:400 14px/16px 'Liberation Sans',sans-serif;color:#000;white-space:nowrap;">+</div>
<div style="left:1383.50px;top:927px;font:400 14px/16px 'Liberation Sans',sans-serif;color:#000;white-space:nowrap;">+</div>
<div style="left:1416.50px;top:927px;font:400 14px/16px 'Liberation Sans',sans-serif;color:#000;white-space:nowrap;">+</div>
<div style="left:1515.50px;top:927px;font:400 14px/16px 'Liberation Sans',sans-serif;color:#000;white-space:nowrap;">+</div>
<div style="left:250.02px;top:944px;font:400 14px/16px 'Liberation Sans',sans-serif;color:#000;white-space:nowrap;letter-spacing:-0.600px;">23</div>
<div style="left:287.50px;top:944px;font:400 14px/16px 'Liberation Sans',sans-serif;color:#000;white-space:nowrap;letter-spacing:-0.800px;">MS01015039</div>
<div style="left:436.00px;top:944px;font:400 14px/16px 'Liberation Sans',sans-serif;color:#000;white-space:nowrap;letter-spacing:-0.600px;">Bùi Minh Phương</div>
<div style="left:687.68px;top:944px;font:400 14px/16px 'Liberation Sans',sans-serif;color:#000;white-space:nowrap;letter-spacing:-0.600px;">21/02/2022</div>
<div style="left:806.04px;top:944px;font:400 14px/16px 'Liberation Sans',sans-serif;color:#000;white-space:nowrap;letter-spacing:-0.600px;">22</div>
<div style="left:954.50px;top:944px;font:400 14px/16px 'Liberation Sans',sans-serif;color:#000;white-space:nowrap;">+</div>
<div style="left:1053.50px;top:944px;font:400 14px/16px 'Liberation Sans',sans-serif;color:#000;white-space:nowrap;">+</div>
<div style="left:1086.50px;top:944px;font:400 14px/16px 'Liberation Sans',sans-serif;color:#000;white-space:nowrap;">+</div>
<div style="left:1119.50px;top:944px;font:400 14px/16px 'Liberation Sans',sans-serif;color:#000;white-space:nowrap;">+</div>
<div style="left:1152.50px;top:944px;font:400 14px/16px 'Liberation Sans',sans-serif;color:#000;white-space:nowrap;">+</div>
<div style="left:1185.50px;top:944px;font:400 14px/16px 'Liberation Sans',sans-serif;color:#000;white-space:nowrap;">+</div>
<div style="left:1284.50px;top:944px;font:400 14px/16px 'Liberation Sans',sans-serif;color:#000;white-space:nowrap;">+</div>
<div style="left:1317.50px;top:944px;font:400 14px/16px 'Liberation Sans',sans-serif;color:#000;white-space:nowrap;">+</div>
<div style="left:1350.50px;top:944px;font:400 14px/16px 'Liberation Sans',sans-serif;color:#000;white-space:nowrap;">+</div>
<div style="left:1383.50px;top:944px;font:400 14px/16px 'Liberation Sans',sans-serif;color:#000;white-space:nowrap;">+</div>
<div style="left:1416.50px;top:944px;font:400 14px/16px 'Liberation Sans',sans-serif;color:#000;white-space:nowrap;">+</div>
<div style="left:1515.50px;top:944px;font:400 14px/16px 'Liberation Sans',sans-serif;color:#000;white-space:nowrap;">+</div>
<div style="left:250.02px;top:961px;font:400 14px/16px 'Liberation Sans',sans-serif;color:#000;white-space:nowrap;letter-spacing:-0.600px;">24</div>
<div style="left:287.50px;top:961px;font:400 14px/16px 'Liberation Sans',sans-serif;color:#000;white-space:nowrap;letter-spacing:-0.800px;">MS0108079</div>
<div style="left:436.00px;top:961px;font:400 14px/16px 'Liberation Sans',sans-serif;color:#000;white-space:nowrap;letter-spacing:-0.600px;">Bùi Thị Hà Anh</div>
<div style="left:687.68px;top:961px;font:400 14px/16px 'Liberation Sans',sans-serif;color:#000;white-space:nowrap;letter-spacing:-0.600px;">16/05/2022</div>
<div style="left:806.04px;top:961px;font:400 14px/16px 'Liberation Sans',sans-serif;color:#000;white-space:nowrap;letter-spacing:-0.600px;">22</div>
<div style="left:954.50px;top:961px;font:400 14px/16px 'Liberation Sans',sans-serif;color:#000;white-space:nowrap;">+</div>
<div style="left:1053.50px;top:961px;font:400 14px/16px 'Liberation Sans',sans-serif;color:#000;white-space:nowrap;">+</div>
<div style="left:1086.50px;top:961px;font:400 14px/16px 'Liberation Sans',sans-serif;color:#000;white-space:nowrap;">+</div>
<div style="left:1119.50px;top:961px;font:400 14px/16px 'Liberation Sans',sans-serif;color:#000;white-space:nowrap;">+</div>
<div style="left:1152.50px;top:961px;font:400 14px/16px 'Liberation Sans',sans-serif;color:#000;white-space:nowrap;">+</div>
<div style="left:1185.50px;top:961px;font:400 14px/16px 'Liberation Sans',sans-serif;color:#000;white-space:nowrap;">+</div>
<div style="left:1284.50px;top:961px;font:400 14px/16px 'Liberation Sans',sans-serif;color:#000;white-space:nowrap;">+</div>
<div style="left:1317.50px;top:961px;font:400 14px/16px 'Liberation Sans',sans-serif;color:#000;white-space:nowrap;">+</div>
<div style="left:1350.50px;top:961px;font:400 14px/16px 'Liberation Sans',sans-serif;color:#000;white-space:nowrap;">+</div>
<div style="left:1383.50px;top:961px;font:400 14px/16px 'Liberation Sans',sans-serif;color:#000;white-space:nowrap;">+</div>
<div style="left:1416.50px;top:961px;font:400 14px/16px 'Liberation Sans',sans-serif;color:#000;white-space:nowrap;">+</div>
<div style="left:1515.50px;top:961px;font:400 14px/16px 'Liberation Sans',sans-serif;color:#000;white-space:nowrap;">+</div>
<div style="left:250.02px;top:978px;font:400 14px/16px 'Liberation Sans',sans-serif;color:#000;white-space:nowrap;letter-spacing:-0.600px;">25</div>
<div style="left:287.50px;top:978px;font:400 14px/16px 'Liberation Sans',sans-serif;color:#000;white-space:nowrap;letter-spacing:-0.800px;">MS01015035</div>
<div style="left:436.00px;top:978px;font:400 14px/16px 'Liberation Sans',sans-serif;color:#000;white-space:nowrap;letter-spacing:-0.600px;">Đỗ Đức Mạnh</div>
<div style="left:687.68px;top:978px;font:400 14px/16px 'Liberation Sans',sans-serif;color:#000;white-space:nowrap;letter-spacing:-0.600px;">25/04/2022</div>
<div style="left:806.04px;top:978px;font:400 14px/16px 'Liberation Sans',sans-serif;color:#000;white-space:nowrap;letter-spacing:-0.600px;">22</div>
<div style="left:954.50px;top:978px;font:400 14px/16px 'Liberation Sans',sans-serif;color:#000;white-space:nowrap;">+</div>
<div style="left:1053.50px;top:978px;font:400 14px/16px 'Liberation Sans',sans-serif;color:#000;white-space:nowrap;">+</div>
<div style="left:1086.50px;top:978px;font:400 14px/16px 'Liberation Sans',sans-serif;color:#000;white-space:nowrap;">+</div>
<div style="left:1119.50px;top:978px;font:400 14px/16px 'Liberation Sans',sans-serif;color:#000;white-space:nowrap;">+</div>
<div style="left:1152.50px;top:978px;font:400 14px/16px 'Liberation Sans',sans-serif;color:#000;white-space:nowrap;">+</div>
<div style="left:1185.50px;top:978px;font:400 14px/16px 'Liberation Sans',sans-serif;color:#000;white-space:nowrap;">+</div>
<div style="left:1284.50px;top:978px;font:400 14px/16px 'Liberation Sans',sans-serif;color:#000;white-space:nowrap;">+</div>
<div style="left:1317.50px;top:978px;font:400 14px/16px 'Liberation Sans',sans-serif;color:#000;white-space:nowrap;">+</div>
<div style="left:1350.50px;top:978px;font:400 14px/16px 'Liberation Sans',sans-serif;color:#000;white-space:nowrap;">+</div>
<div style="left:1383.50px;top:978px;font:400 14px/16px 'Liberation Sans',sans-serif;color:#000;white-space:nowrap;">+</div>
<div style="left:1416.50px;top:978px;font:400 14px/16px 'Liberation Sans',sans-serif;color:#000;white-space:nowrap;">+</div>
<div style="left:1515.50px;top:978px;font:400 14px/16px 'Liberation Sans',sans-serif;color:#000;white-space:nowrap;">+</div>
<div style="left:250.02px;top:995px;font:400 14px/16px 'Liberation Sans',sans-serif;color:#000;white-space:nowrap;letter-spacing:-0.600px;">26</div>
<div style="left:287.50px;top:995px;font:400 14px/16px 'Liberation Sans',sans-serif;color:#000;white-space:nowrap;letter-spacing:-0.800px;">MS01015045</div>
<div style="left:436.00px;top:995px;font:400 14px/16px 'Liberation Sans',sans-serif;color:#000;white-space:nowrap;letter-spacing:-0.600px;">Hoàng Minh Tiến</div>
<div style="left:687.68px;top:995px;font:400 14px/16px 'Liberation Sans',sans-serif;color:#000;white-space:nowrap;letter-spacing:-0.600px;">13/06/2022</div>
<div style="left:806.04px;top:995px;font:400 14px/16px 'Liberation Sans',sans-serif;color:#000;white-space:nowrap;letter-spacing:-0.600px;">22</div>
<div style="left:954.50px;top:995px;font:400 14px/16px 'Liberation Sans',sans-serif;color:#000;white-space:nowrap;">+</div>
<div style="left:1053.50px;top:995px;font:400 14px/16px 'Liberation Sans',sans-serif;color:#000;white-space:nowrap;">+</div>
<div style="left:1086.50px;top:995px;font:400 14px/16px 'Liberation Sans',sans-serif;color:#000;white-space:nowrap;">+</div>
<div style="left:1119.50px;top:995px;font:400 14px/16px 'Liberation Sans',sans-serif;color:#000;white-space:nowrap;">+</div>
<div style="left:1152.50px;top:995px;font:400 14px/16px 'Liberation Sans',sans-serif;color:#000;white-space:nowrap;">+</div>
<div style="left:1185.50px;top:995px;font:400 14px/16px 'Liberation Sans',sans-serif;color:#000;white-space:nowrap;">+</div>
<div style="left:1284.50px;top:995px;font:400 14px/16px 'Liberation Sans',sans-serif;color:#000;white-space:nowrap;">+</div>
<div style="left:1317.50px;top:995px;font:400 14px/16px 'Liberation Sans',sans-serif;color:#000;white-space:nowrap;">+</div>
<div style="left:1350.50px;top:995px;font:400 14px/16px 'Liberation Sans',sans-serif;color:#000;white-space:nowrap;">+</div>
<div style="left:1383.50px;top:995px;font:400 14px/16px 'Liberation Sans',sans-serif;color:#000;white-space:nowrap;">+</div>
<div style="left:1416.50px;top:995px;font:400 14px/16px 'Liberation Sans',sans-serif;color:#000;white-space:nowrap;">+</div>
<div style="left:1515.50px;top:995px;font:400 14px/16px 'Liberation Sans',sans-serif;color:#000;white-space:nowrap;">+</div>
<div style="left:472.10px;top:1012px;font:700 14px/16px 'Liberation Sans',sans-serif;color:#000;white-space:nowrap;letter-spacing:-0.600px;">Tổng số</div>
<div style="left:798.86px;top:1012px;font:700 14px/16px 'Liberation Sans',sans-serif;color:#000;white-space:nowrap;letter-spacing:-0.600px;">567</div>
<div style="left:856.22px;top:1012px;font:700 14px/16px 'Liberation Sans',sans-serif;color:#000;white-space:nowrap;">5</div>
<div style="left:898.22px;top:1012px;font:700 14px/16px 'Liberation Sans',sans-serif;color:#000;white-space:nowrap;">3</div>
<div style="left:941.22px;top:1012px;font:700 14px/16px 'Liberation Sans',sans-serif;color:#000;white-space:nowrap;">2</div>
<div style="left:231px;top:531px;width:1310px;height:1px;background:#000;"></div>
<div style="left:231px;top:569px;width:1310px;height:1px;background:#000;"></div>
<div style="left:231px;top:586px;width:1310px;height:1px;background:#000;"></div>
<div style="left:231px;top:603px;width:1310px;height:1px;background:#000;"></div>
<div style="left:231px;top:620px;width:1310px;height:1px;background:#000;"></div>
<div style="left:231px;top:637px;width:1310px;height:1px;background:#000;"></div>
<div style="left:231px;top:654px;width:1310px;height:1px;background:#000;"></div>
<div style="left:231px;top:671px;width:1310px;height:1px;background:#000;"></div>
<div style="left:231px;top:688px;width:1310px;height:1px;background:#000;"></div>
<div style="left:231px;top:705px;width:1310px;height:1px;background:#000;"></div>
<div style="left:231px;top:722px;width:1310px;height:1px;background:#000;"></div>
<div style="left:231px;top:739px;width:1310px;height:1px;background:#000;"></div>
<div style="left:231px;top:756px;width:1310px;height:1px;background:#000;"></div>
<div style="left:231px;top:773px;width:1310px;height:1px;background:#000;"></div>
<div style="left:231px;top:790px;width:1310px;height:1px;background:#000;"></div>
<div style="left:231px;top:807px;width:1310px;height:1px;background:#000;"></div>
<div style="left:231px;top:824px;width:1310px;height:1px;background:#000;"></div>
<div style="left:231px;top:841px;width:1310px;height:1px;background:#000;"></div>
<div style="left:231px;top:858px;width:1310px;height:1px;background:#000;"></div>
<div style="left:231px;top:875px;width:1310px;height:1px;background:#000;"></div>
<div style="left:231px;top:892px;width:1310px;height:1px;background:#000;"></div>
<div style="left:231px;top:909px;width:1310px;height:1px;background:#000;"></div>
<div style="left:231px;top:926px;width:1310px;height:1px;background:#000;"></div>
<div style="left:231px;top:943px;width:1310px;height:1px;background:#000;"></div>
<div style="left:231px;top:960px;width:1310px;height:1px;background:#000;"></div>
<div style="left:231px;top:977px;width:1310px;height:1px;background:#000;"></div>
<div style="left:231px;top:994px;width:1310px;height:1px;background:#000;"></div>
<div style="left:231px;top:1011px;width:1310px;height:1px;background:#000;"></div>
<div style="left:231px;top:1028px;width:1310px;height:1px;background:#000;"></div>
<div style="left:823px;top:550px;width:718px;height:1px;background:#000;"></div>
<div style="left:284px;top:531px;width:1px;height:498px;background:#000;"></div>
<div style="left:433px;top:531px;width:1px;height:498px;background:#000;"></div>
<div style="left:674px;top:531px;width:1px;height:498px;background:#000;"></div>
<div style="left:764px;top:531px;width:1px;height:498px;background:#000;"></div>
<div style="left:823px;top:531px;width:1px;height:498px;background:#000;"></div>
<div style="left:866px;top:550px;width:1px;height:479px;background:#000;"></div>
<div style="left:909px;top:550px;width:1px;height:479px;background:#000;"></div>
<div style="left:984px;top:531px;width:1px;height:498px;background:#000;"></div>
<div style="left:1017px;top:531px;width:1px;height:498px;background:#000;"></div>
<div style="left:1050px;top:531px;width:1px;height:498px;background:#000;"></div>
<div style="left:1083px;top:531px;width:1px;height:498px;background:#000;"></div>
<div style="left:1116px;top:531px;width:1px;height:498px;background:#000;"></div>
<div style="left:1149px;top:531px;width:1px;height:498px;background:#000;"></div>
<div style="left:1182px;top:531px;width:1px;height:498px;background:#000;"></div>
<div style="left:1215px;top:531px;width:1px;height:498px;background:#000;"></div>
<div style="left:1248px;top:531px;width:1px;height:498px;background:#000;"></div>
<div style="left:1281px;top:531px;width:1px;height:498px;background:#000;"></div>
<div style="left:1314px;top:531px;width:1px;height:498px;background:#000;"></div>
<div style="left:1347px;top:531px;width:1px;height:498px;background:#000;"></div>
<div style="left:1380px;top:531px;width:1px;height:498px;background:#000;"></div>
<div style="left:1413px;top:531px;width:1px;height:498px;background:#000;"></div>
<div style="left:1446px;top:531px;width:1px;height:498px;background:#000;"></div>
<div style="left:1479px;top:531px;width:1px;height:498px;background:#000;"></div>
<div style="left:1512px;top:531px;width:1px;height:498px;background:#000;"></div>
<div style="left:231px;top:1012px;width:533px;height:16px;background:#fff;"></div>
<div style="left:472.10px;top:1012px;font:700 14px/16px 'Liberation Sans',sans-serif;color:#000;white-space:nowrap;letter-spacing:-0.600px;">Tổng số</div>
<div style="left:951px;top:416px;width:1px;height:647px;background:#9c9c9c;"></div>
<div style="left:822px;top:549px;width:46px;height:22px;box-sizing:border-box;border:2px solid #217346;background:transparent;"></div>
<div style="left:824px;top:551px;width:42px;height:18px;box-sizing:border-box;border:1px solid #fff;background:transparent;"></div>
<div style="left:863.5px;top:566.5px;width:5px;height:5px;background:#217346;border:1px solid #fff;"></div>
<div style="left:1542px;top:416px;width:20px;height:647px;background:#e6e6e6;"></div>
<div style="left:1545px;top:419px;width:15px;height:15px;box-sizing:border-box;border:1px solid #c6c6c6;background:#fff;"></div>
<svg style="left:1548px;top:423px" width="9" height="6" viewBox="0 0 9 6"><path d="M0.5 5 L4.5 1 L8.5 5 Z" fill="#777"/></svg>
<div style="left:1545px;top:434px;width:15px;height:595px;box-sizing:border-box;border:1px solid #c6c6c6;background:#fff;"></div>
<div style="left:1545px;top:1029px;width:15px;height:19px;background:#dadada;"></div>
<div style="left:1545px;top:1048px;width:15px;height:15px;box-sizing:border-box;border:1px solid #c6c6c6;background:#fff;"></div>
<svg style="left:1548px;top:1053px" width="9" height="6" viewBox="0 0 9 6"><path d="M0.5 1 L4.5 5 L8.5 1 Z" fill="#777"/></svg>
<div style="left:205px;top:1063px;width:1357px;height:28px;background:#e6e6e6;"></div>
<div style="left:205px;top:1063px;width:1337px;height:1px;background:#c6c6c6;"></div>
<svg style="left:229px;top:1071px" width="40" height="12" viewBox="0 0 40 12"><path d="M7 2 L3 6 L7 10 Z M33 2 L37 6 L33 10 Z" fill="#b5b5b5"/></svg>
<div style="left:305px;top:1063px;width:66px;height:25px;background:#fff;"></div>
<div style="left:305px;top:1086px;width:66px;height:2px;background:#217346;"></div>
<div style="left:317.50px;top:1070px;font:700 14px/16px 'Liberation Sans',sans-serif;color:#217346;white-space:nowrap;letter-spacing:-0.641px;">Mầm 1</div>
<svg style="left:403px;top:1068px" width="18" height="18" viewBox="0 0 18 18"><circle cx="9" cy="9" r="7.6" fill="none" stroke="#6d6d6d" stroke-width="1.3"/><path d="M9 5 V13 M5 9 H13" stroke="#6d6d6d" stroke-width="1.8"/></svg>
<svg style="left:884px;top:1070px" width="6" height="14" viewBox="0 0 6 14"><circle cx="3" cy="3" r="0.9" fill="#9a9a9a"/><circle cx="3" cy="7" r="0.9" fill="#9a9a9a"/><circle cx="3" cy="11" r="0.9" fill="#9a9a9a"/></svg>
<div style="left:903px;top:1070px;width:637px;height:15px;background:#dadada;"></div>
<div style="left:903px;top:1070px;width:18px;height:15px;box-sizing:border-box;border:1px solid #c6c6c6;background:#fff;"></div>
<svg style="left:908px;top:1073px" width="8" height="9" viewBox="0 0 8 9"><path d="M6 0.5 V8.5 L1.5 4.5 Z" fill="#666"/></svg>
<div style="left:1146px;top:1070px;width:208px;height:15px;box-sizing:border-box;border:1px solid #c6c6c6;background:#fff;"></div>
<div style="left:1525px;top:1070px;width:15px;height:15px;box-sizing:border-box;border:1px solid #c6c6c6;background:#fff;"></div>
<svg style="left:1529px;top:1073px" width="8" height="9" viewBox="0 0 8 9"><path d="M2 0.5 V8.5 L6.5 4.5 Z" fill="#666"/></svg>
<div style="left:205px;top:1091px;width:1357px;height:20px;background:#f1f1f1;"></div>
<div style="left:205px;top:1091px;width:1357px;height:1px;background:#dadada;"></div>
<div style="left:212.00px;top:1097px;font:400 12px/14px 'Liberation Sans',sans-serif;color:#444;white-space:nowrap;letter-spacing:-0.922px;">Ready</div>
<div style="left:1260px;top:1092px;width:38px;height:19px;background:#cfcfcf;"></div>
<svg style="left:1268px;top:1093px" width="230" height="18" viewBox="0 0 230 18">
<rect x="2.5" y="2.5" width="13" height="13" fill="none" stroke="#666" stroke-width="1"/>
<path d="M2.5 6.8 H15.5 M2.5 11.2 H15.5 M6.8 2.5 V15.5 M11.2 2.5 V15.5" stroke="#666" stroke-width="1"/>
<rect x="42.5" y="2.5" width="13" height="13" fill="none" stroke="#666" stroke-width="1"/>
<rect x="45.5" y="5.5" width="7" height="7" fill="none" stroke="#666" stroke-width="1"/>
<path d="M47 7.5 H51 M47 9.5 H51" stroke="#666" stroke-width="0.8"/>
<path d="M79.5 2.5 H92.5 V15.5 H79.5 Z M79.5 9.5 H86 V2.5 M83 2.5 V9.5" fill="none" stroke="#666" stroke-width="1"/>
<rect x="111" y="8" width="6" height="2" fill="#666"/>
<rect x="121" y="8.5" width="100" height="1" fill="#9a9a9a"/>
<rect x="169" y="3" width="4" height="11" fill="#666"/>
</svg>
<svg style="left:1490px;top:1096px" width="14" height="14" viewBox="0 0 14 14"><path d="M7 1.5 V12.5 M1.5 7 H12.5" stroke="#666" stroke-width="2"/></svg>
<div style="left:1516.00px;top:1096px;font:400 12px/14px 'Liberation Sans',sans-serif;color:#444;white-space:nowrap;letter-spacing:-1.229px;">100%</div>
<div style="left:203px;top:1111px;width:1361px;height:2px;background:#111;"></div>
<div style="left:1562px;top:219px;width:2px;height:894px;background:#1a1a1a;"></div>
<svg style="left:0;top:0" width="1564" height="1113" viewBox="0 0 1564 1113">
<path d="M1247.5 137.9 L918 208.6" stroke="#f04545" stroke-width="7.6" stroke-dasharray="23 8.4" stroke-linecap="butt" fill="none"/>
<circle cx="1247.5" cy="137.9" r="3.5" fill="#f04545"/>
<path d="M883 217.2 L902.2 201.2 L907.8 224 Z" fill="#f04545"/>
</svg>
</body></html>
